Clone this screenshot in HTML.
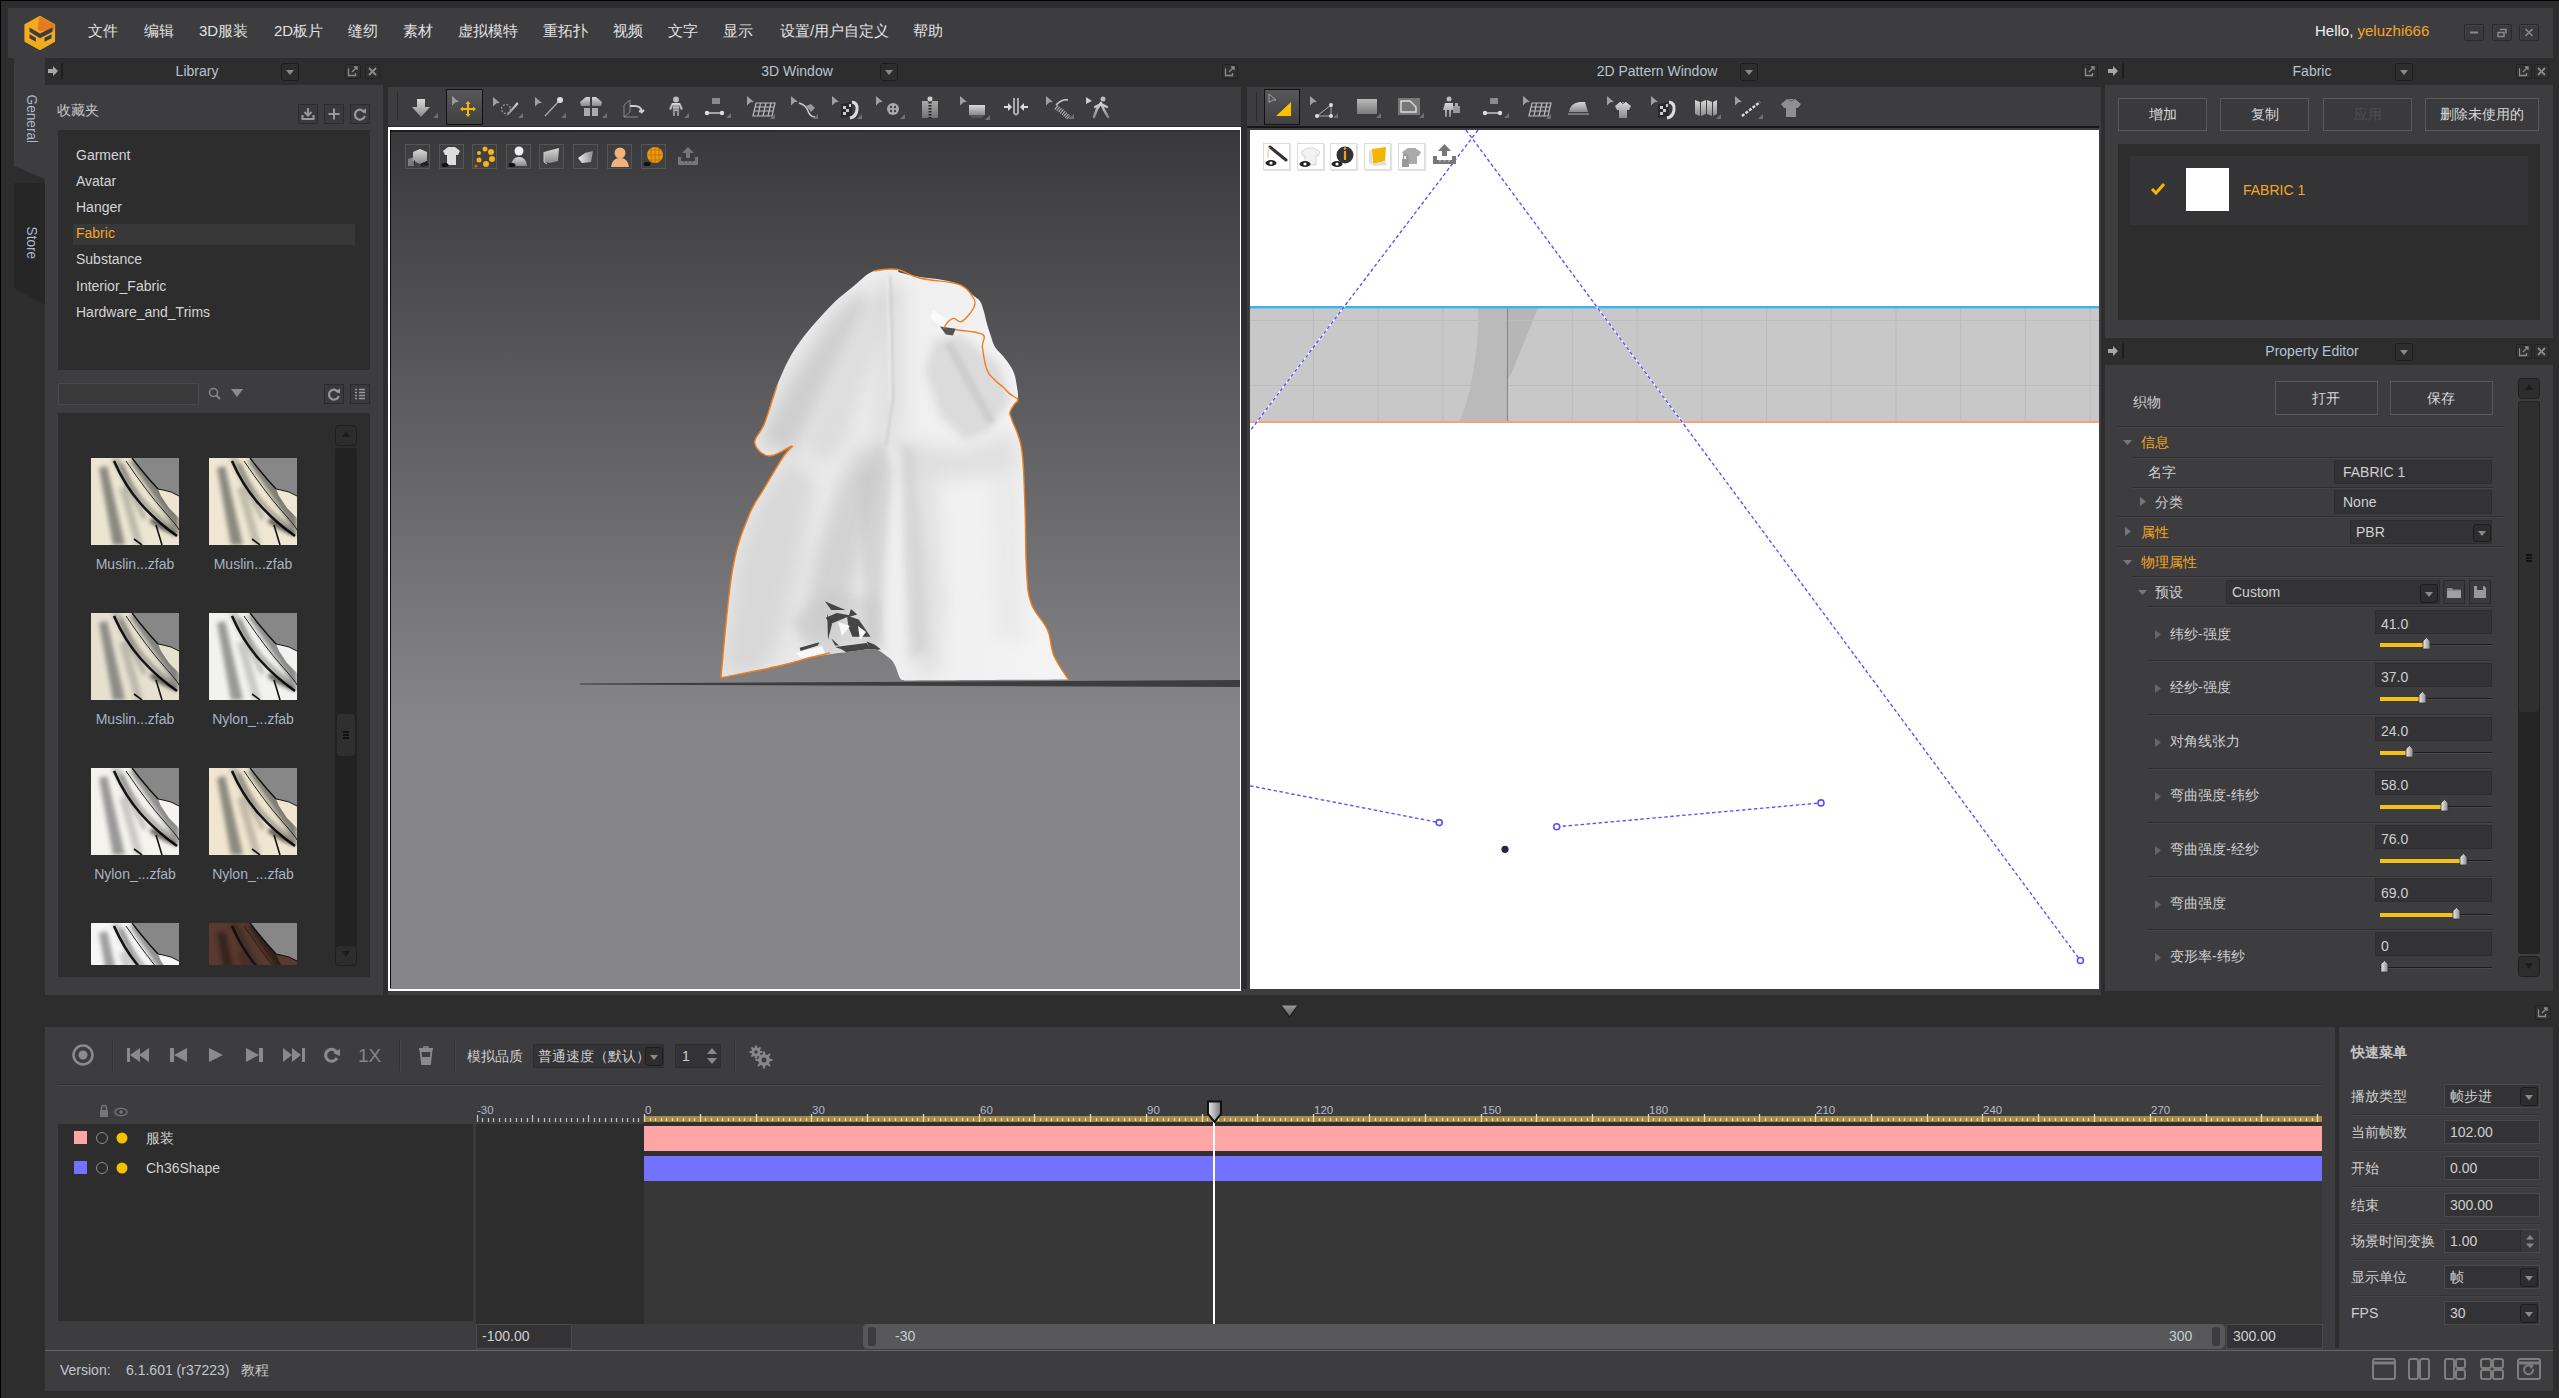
<!DOCTYPE html><html><head><meta charset="utf-8"><style>
*{margin:0;padding:0;box-sizing:border-box}
html,body{width:2559px;height:1398px;overflow:hidden;background:#2d2d2d}
body{position:relative;font-family:"Liberation Sans",sans-serif;font-size:14px;color:#d2d2d2}
div,svg{position:absolute}
.t{white-space:nowrap;line-height:20px;height:20px}

.pn{background:#3d3d3f}
.dk{background:#2d2d2d}
.tt{color:#b9c3d1;font-size:14px}
.mi{color:#e2e2e2;font-size:15px}
.ddb{border:1px solid #1d1d1d;border-radius:3px;background:#2d2d2d}
.tbb{border:1px solid #222;border-radius:2px;background:#2f2f2f}
.li{color:#d4d4d4;font-size:14px}
.or{color:#f5a623}
</style></head><body><div style="left:0px;top:0px;width:2559px;height:1px;background:#000"></div><div style="left:0px;top:0px;width:1px;height:1398px;background:#000"></div><div class="pn" style="left:8px;top:8px;width:2545px;height:50px;"></div><svg style="left:0px;top:0px" width="70" height="60"><path d="M40 17L54 25V41L40 49L25.5 41V25Z" fill="#f2aa1e" stroke="#f2aa1e" stroke-width="2.2" stroke-linejoin="round"/><path d="M40 17L54 25V30L40 30.5L38 29Z" fill="#e47a24" stroke="#e47a24" stroke-width="1" stroke-linejoin="round"/><path d="M29.5 27.5L40 33.5L52.5 27.5V31.8L40 38.3L29.5 31.8Z" fill="#3d3d3f"/><path d="M29.5 34.3L35.8 37.8V41.8L29.5 38.3Z" fill="#3d3d3f"/><path d="M44.5 37.8L51.5 34.3V38.3L44.5 41.8Z" fill="#3d3d3f"/></svg><div class="t mi" style="left:88px;top:21px;">文件</div><div class="t mi" style="left:144px;top:21px;">编辑</div><div class="t mi" style="left:199px;top:21px;">3D服装</div><div class="t mi" style="left:274px;top:21px;">2D板片</div><div class="t mi" style="left:348px;top:21px;">缝纫</div><div class="t mi" style="left:403px;top:21px;">素材</div><div class="t mi" style="left:458px;top:21px;">虚拟模特</div><div class="t mi" style="left:543px;top:21px;">重拓扑</div><div class="t mi" style="left:613px;top:21px;">视频</div><div class="t mi" style="left:668px;top:21px;">文字</div><div class="t mi" style="left:723px;top:21px;">显示</div><div class="t mi" style="left:780px;top:21px;">设置/用户自定义</div><div class="t mi" style="left:913px;top:21px;">帮助</div><div class="t mi" style="left:2315px;top:21px;color:#f0f0f0">Hello, <span class="or">yeluzhi666</span></div><div style="left:2464px;top:24px;width:20px;height:17px;border:1px solid #2a2a2a;border-radius:2px;background:#3a3a3c;box-shadow:inset 1px 1px 0 #444"></div><div style="left:2492px;top:24px;width:20px;height:17px;border:1px solid #2a2a2a;border-radius:2px;background:#3a3a3c;box-shadow:inset 1px 1px 0 #444"></div><div style="left:2519px;top:24px;width:20px;height:17px;border:1px solid #2a2a2a;border-radius:2px;background:#3a3a3c;box-shadow:inset 1px 1px 0 #444"></div><svg style="left:2464px;top:24px" width="20" height="17"><path d="M6 8.5H14" stroke="#8a8a8a" stroke-width="2"/></svg><svg style="left:2492px;top:24px" width="20" height="17"><path d="M8 5.5H14V9.5M6 8.5H12V12.5H6Z" stroke="#8a8a8a" stroke-width="1.5" fill="none"/></svg><svg style="left:2519px;top:24px" width="20" height="17"><path d="M6.5 5L13.5 12M13.5 5L6.5 12" stroke="#8a8a8a" stroke-width="1.6"/></svg><svg style="left:14px;top:58px" width="31" height="250"><path d="M0 0H31V121L0 108Z" fill="#3d3d3f"/><path d="M0 125H31V247L0 230Z" fill="#262626"/></svg><div class="t" style="left:21.5px;top:94px;transform:rotate(90deg) scaleX(0.94);transform-origin:10px 10px;color:#a9b8cc;font-size:14.5px">General</div><div class="t" style="left:21.5px;top:226px;transform:rotate(90deg) scaleX(0.94);transform-origin:10px 10px;color:#a9b8cc;font-size:14.5px">Store</div><div class="pn" style="left:45px;top:85px;width:338px;height:910px;"></div><svg style="left:48px;top:66px" width="10" height="10"><path d="M0 3H5V0L10 5L5 10V7H0Z" fill="#a8a8a8"/></svg><div style="left:61px;top:63px;width:2px;height:16px;background:#1e1e1e"></div><div class="t tt" style="left:47px;width:300px;text-align:center;top:61px;">Library</div><div class="ddb" style="left:281px;top:63px;width:18px;height:18px"></div><svg style="left:286.0px;top:70.0px" width="8" height="5"><path d="M0 0H8L4.0 5Z" fill="#8a8a8a"/></svg><div class="tbb" style="left:345px;top:64px;width:16px;height:15px"></div><svg style="left:345px;top:64px" width="16" height="15"><path d="M4 5H3.5V11.5H10.5V9" stroke="#8c8c8c" stroke-width="1.3" fill="none"/><path d="M7 8L12 3M9 3H12V6" stroke="#8c8c8c" stroke-width="1.3" fill="none"/></svg><div class="tbb" style="left:365px;top:64px;width:15px;height:15px"></div><svg style="left:365px;top:64px" width="15" height="15"><path d="M4 4L11 11M11 4L4 11" stroke="#8c8c8c" stroke-width="1.8"/></svg><div class="t" style="left:57px;top:100px;color:#c8c8c8;font-size:14px">收藏夹</div><div style="left:298px;top:104px;width:20px;height:20px;border:1px solid #2c2c2c;background:#3a3a3c"></div><div style="left:324px;top:104px;width:20px;height:20px;border:1px solid #2c2c2c;background:#3a3a3c"></div><div style="left:350px;top:104px;width:20px;height:20px;border:1px solid #2c2c2c;background:#3a3a3c"></div><svg style="left:298px;top:104px" width="20" height="20"><path d="M10 4V11M6.5 8L10 11.5L13.5 8" stroke="#999" stroke-width="2" fill="none"/><path d="M4.5 11V15H15.5V11" stroke="#999" stroke-width="2" fill="none"/></svg><svg style="left:324px;top:104px" width="20" height="20"><path d="M10 4.5V15.5M4.5 10H15.5" stroke="#999" stroke-width="2"/></svg><svg style="left:350px;top:104px" width="20" height="20"><path d="M14.5 8.5A5 5 0 1 0 14.8 12" stroke="#999" stroke-width="2.2" fill="none"/><path d="M11 7.5L16 4.5V9.5Z" fill="#999"/></svg><div class="dk" style="left:58px;top:130px;width:312px;height:240px;"></div><div style="left:73px;top:224px;width:282px;height:21px;background:#383838"></div><div class="t li" style="left:76px;top:145.0px;">Garment</div><div class="t li" style="left:76px;top:171.1px;">Avatar</div><div class="t li" style="left:76px;top:197.2px;">Hanger</div><div class="t li or" style="left:76px;top:223.3px;">Fabric</div><div class="t li" style="left:76px;top:249.39999999999998px;">Substance</div><div class="t li" style="left:76px;top:275.5px;">Interior_Fabric</div><div class="t li" style="left:76px;top:301.6px;">Hardware_and_Trims</div><div style="left:58px;top:383px;width:141px;height:22px;background:#393939;border:1px solid #4a4a4a"></div><svg style="left:207px;top:386px" width="16" height="16"><circle cx="6.5" cy="6.5" r="4" stroke="#888" stroke-width="1.5" fill="none"/><path d="M9.5 9.5L13 13" stroke="#888" stroke-width="2"/></svg><svg style="left:231px;top:389px" width="12" height="8"><path d="M0 0H12L6.0 8Z" fill="#8c8c8c"/></svg><div style="left:324px;top:384px;width:20px;height:20px;background:#3a3a3c;border:1px solid #2a2a2a"></div><svg style="left:324px;top:384px" width="20" height="20"><path d="M14.5 8.5A5 5 0 1 0 14.8 12" stroke="#999" stroke-width="2.2" fill="none"/><path d="M11 7.5L16 4.5V9.5Z" fill="#999"/></svg><div style="left:350px;top:384px;width:20px;height:20px;background:#3a3a3c;border:1px solid #2a2a2a"></div><svg style="left:350px;top:384px" width="20" height="20"><path d="M5 5.5H7M5 8.5H7M5 11.5H7M5 14.5H7M9 5.5H15M9 8.5H15M9 11.5H15M9 14.5H15" stroke="#999" stroke-width="1.6"/></svg><div class="dk" style="left:58px;top:413px;width:312px;height:564px;"></div><svg style="left:91px;top:458px" width="88" height="87" viewBox="0 0 88 87"><rect width="88" height="87" fill="#ece5d2"/><path d="M8 10L16 8L34 87H22Z" fill="#6a6a64" opacity="0.75" filter="url(#bl2)"/><path d="M28 30L36 28L52 87H44Z" fill="#6a6a64" opacity="0.35" filter="url(#bl2)"/><path d="M38 2L46 2L88 50V76Z" fill="#6a6a64" opacity="0.85" filter="url(#bl2)"/><path d="M20 0L28 0L56 60L52 62Z" fill="#6a6a64" opacity="0.45" filter="url(#bl2)"/><path d="M41 0H88V38L80 34L72 32L67 31L58 21L48 9Z" fill="#878787"/><path d="M67 31L72 32L80 34L88 38V60L78 50L70 38Z" fill="#ece5d2"/><path d="M41 0L48 9L58 21L67 31" stroke="#111" stroke-width="1.4" fill="none"/><path d="M67 31L72 32L80 34L88 38" stroke="#111" stroke-width="1" fill="none"/><path d="M23 3Q34 28 50 46T86 78" stroke="#111" stroke-width="2.6" fill="none"/><path d="M30 6Q40 30 54 46T84 70" stroke="#333" stroke-width="3" fill="none" opacity="0.6" filter="url(#bl2)"/><path d="M35 3Q56 34 72 52T88 72" stroke="#222" stroke-width="1" fill="none"/><path d="M60 62Q72 70 86 76" stroke="#000" stroke-width="4" fill="none" filter="url(#bl2)" opacity="0.8"/><path d="M65 67L71 87" stroke="#111" stroke-width="1.6" fill="none"/><path d="M43 81L51 87" stroke="#111" stroke-width="1.6" fill="none"/></svg><div class="t" style="left:-15px;width:300px;text-align:center;top:554px;font-size:14px;color:#aab3c2">Muslin...zfab</div><svg style="left:209px;top:458px" width="88" height="87" viewBox="0 0 88 87"><rect width="88" height="87" fill="#efe7d3"/><path d="M8 10L16 8L34 87H22Z" fill="#6a6a64" opacity="0.75" filter="url(#bl2)"/><path d="M28 30L36 28L52 87H44Z" fill="#6a6a64" opacity="0.35" filter="url(#bl2)"/><path d="M38 2L46 2L88 50V76Z" fill="#6a6a64" opacity="0.85" filter="url(#bl2)"/><path d="M20 0L28 0L56 60L52 62Z" fill="#6a6a64" opacity="0.45" filter="url(#bl2)"/><path d="M41 0H88V38L80 34L72 32L67 31L58 21L48 9Z" fill="#878787"/><path d="M67 31L72 32L80 34L88 38V60L78 50L70 38Z" fill="#efe7d3"/><path d="M41 0L48 9L58 21L67 31" stroke="#111" stroke-width="1.4" fill="none"/><path d="M67 31L72 32L80 34L88 38" stroke="#111" stroke-width="1" fill="none"/><path d="M23 3Q34 28 50 46T86 78" stroke="#111" stroke-width="2.6" fill="none"/><path d="M30 6Q40 30 54 46T84 70" stroke="#333" stroke-width="3" fill="none" opacity="0.6" filter="url(#bl2)"/><path d="M35 3Q56 34 72 52T88 72" stroke="#222" stroke-width="1" fill="none"/><path d="M60 62Q72 70 86 76" stroke="#000" stroke-width="4" fill="none" filter="url(#bl2)" opacity="0.8"/><path d="M65 67L71 87" stroke="#111" stroke-width="1.6" fill="none"/><path d="M43 81L51 87" stroke="#111" stroke-width="1.6" fill="none"/></svg><div class="t" style="left:103px;width:300px;text-align:center;top:554px;font-size:14px;color:#aab3c2">Muslin...zfab</div><svg style="left:91px;top:613px" width="88" height="87" viewBox="0 0 88 87"><rect width="88" height="87" fill="#e6e0cf"/><path d="M8 10L16 8L34 87H22Z" fill="#707070" opacity="0.75" filter="url(#bl2)"/><path d="M28 30L36 28L52 87H44Z" fill="#707070" opacity="0.35" filter="url(#bl2)"/><path d="M38 2L46 2L88 50V76Z" fill="#707070" opacity="0.85" filter="url(#bl2)"/><path d="M20 0L28 0L56 60L52 62Z" fill="#707070" opacity="0.45" filter="url(#bl2)"/><path d="M41 0H88V38L80 34L72 32L67 31L58 21L48 9Z" fill="#878787"/><path d="M67 31L72 32L80 34L88 38V60L78 50L70 38Z" fill="#e6e0cf"/><path d="M41 0L48 9L58 21L67 31" stroke="#111" stroke-width="1.4" fill="none"/><path d="M67 31L72 32L80 34L88 38" stroke="#111" stroke-width="1" fill="none"/><path d="M23 3Q34 28 50 46T86 78" stroke="#111" stroke-width="2.6" fill="none"/><path d="M30 6Q40 30 54 46T84 70" stroke="#333" stroke-width="3" fill="none" opacity="0.6" filter="url(#bl2)"/><path d="M35 3Q56 34 72 52T88 72" stroke="#222" stroke-width="1" fill="none"/><path d="M60 62Q72 70 86 76" stroke="#000" stroke-width="4" fill="none" filter="url(#bl2)" opacity="0.8"/><path d="M65 67L71 87" stroke="#111" stroke-width="1.6" fill="none"/><path d="M43 81L51 87" stroke="#111" stroke-width="1.6" fill="none"/></svg><div class="t" style="left:-15px;width:300px;text-align:center;top:709px;font-size:14px;color:#aab3c2">Muslin...zfab</div><svg style="left:209px;top:613px" width="88" height="87" viewBox="0 0 88 87"><rect width="88" height="87" fill="#f2f2f0"/><path d="M8 10L16 8L34 87H22Z" fill="#7a7a7a" opacity="0.75" filter="url(#bl2)"/><path d="M28 30L36 28L52 87H44Z" fill="#7a7a7a" opacity="0.35" filter="url(#bl2)"/><path d="M38 2L46 2L88 50V76Z" fill="#7a7a7a" opacity="0.85" filter="url(#bl2)"/><path d="M20 0L28 0L56 60L52 62Z" fill="#7a7a7a" opacity="0.45" filter="url(#bl2)"/><path d="M41 0H88V38L80 34L72 32L67 31L58 21L48 9Z" fill="#878787"/><path d="M67 31L72 32L80 34L88 38V60L78 50L70 38Z" fill="#f2f2f0"/><path d="M41 0L48 9L58 21L67 31" stroke="#111" stroke-width="1.4" fill="none"/><path d="M67 31L72 32L80 34L88 38" stroke="#111" stroke-width="1" fill="none"/><path d="M23 3Q34 28 50 46T86 78" stroke="#111" stroke-width="2.6" fill="none"/><path d="M30 6Q40 30 54 46T84 70" stroke="#333" stroke-width="3" fill="none" opacity="0.6" filter="url(#bl2)"/><path d="M35 3Q56 34 72 52T88 72" stroke="#222" stroke-width="1" fill="none"/><path d="M60 62Q72 70 86 76" stroke="#000" stroke-width="4" fill="none" filter="url(#bl2)" opacity="0.8"/><path d="M65 67L71 87" stroke="#111" stroke-width="1.6" fill="none"/><path d="M43 81L51 87" stroke="#111" stroke-width="1.6" fill="none"/></svg><div class="t" style="left:103px;width:300px;text-align:center;top:709px;font-size:14px;color:#aab3c2">Nylon_...zfab</div><svg style="left:91px;top:768px" width="88" height="87" viewBox="0 0 88 87"><rect width="88" height="87" fill="#f4f3ee"/><path d="M8 10L16 8L34 87H22Z" fill="#7a7a7a" opacity="0.75" filter="url(#bl2)"/><path d="M28 30L36 28L52 87H44Z" fill="#7a7a7a" opacity="0.35" filter="url(#bl2)"/><path d="M38 2L46 2L88 50V76Z" fill="#7a7a7a" opacity="0.85" filter="url(#bl2)"/><path d="M20 0L28 0L56 60L52 62Z" fill="#7a7a7a" opacity="0.45" filter="url(#bl2)"/><path d="M41 0H88V38L80 34L72 32L67 31L58 21L48 9Z" fill="#878787"/><path d="M67 31L72 32L80 34L88 38V60L78 50L70 38Z" fill="#f4f3ee"/><path d="M41 0L48 9L58 21L67 31" stroke="#111" stroke-width="1.4" fill="none"/><path d="M67 31L72 32L80 34L88 38" stroke="#111" stroke-width="1" fill="none"/><path d="M23 3Q34 28 50 46T86 78" stroke="#111" stroke-width="2.6" fill="none"/><path d="M30 6Q40 30 54 46T84 70" stroke="#333" stroke-width="3" fill="none" opacity="0.6" filter="url(#bl2)"/><path d="M35 3Q56 34 72 52T88 72" stroke="#222" stroke-width="1" fill="none"/><path d="M60 62Q72 70 86 76" stroke="#000" stroke-width="4" fill="none" filter="url(#bl2)" opacity="0.8"/><path d="M65 67L71 87" stroke="#111" stroke-width="1.6" fill="none"/><path d="M43 81L51 87" stroke="#111" stroke-width="1.6" fill="none"/></svg><div class="t" style="left:-15px;width:300px;text-align:center;top:864px;font-size:14px;color:#aab3c2">Nylon_...zfab</div><svg style="left:209px;top:768px" width="88" height="87" viewBox="0 0 88 87"><rect width="88" height="87" fill="#f0e6d0"/><path d="M8 10L16 8L34 87H22Z" fill="#6c6a64" opacity="0.75" filter="url(#bl2)"/><path d="M28 30L36 28L52 87H44Z" fill="#6c6a64" opacity="0.35" filter="url(#bl2)"/><path d="M38 2L46 2L88 50V76Z" fill="#6c6a64" opacity="0.85" filter="url(#bl2)"/><path d="M20 0L28 0L56 60L52 62Z" fill="#6c6a64" opacity="0.45" filter="url(#bl2)"/><path d="M41 0H88V38L80 34L72 32L67 31L58 21L48 9Z" fill="#878787"/><path d="M67 31L72 32L80 34L88 38V60L78 50L70 38Z" fill="#f0e6d0"/><path d="M41 0L48 9L58 21L67 31" stroke="#111" stroke-width="1.4" fill="none"/><path d="M67 31L72 32L80 34L88 38" stroke="#111" stroke-width="1" fill="none"/><path d="M23 3Q34 28 50 46T86 78" stroke="#111" stroke-width="2.6" fill="none"/><path d="M30 6Q40 30 54 46T84 70" stroke="#333" stroke-width="3" fill="none" opacity="0.6" filter="url(#bl2)"/><path d="M35 3Q56 34 72 52T88 72" stroke="#222" stroke-width="1" fill="none"/><path d="M60 62Q72 70 86 76" stroke="#000" stroke-width="4" fill="none" filter="url(#bl2)" opacity="0.8"/><path d="M65 67L71 87" stroke="#111" stroke-width="1.6" fill="none"/><path d="M43 81L51 87" stroke="#111" stroke-width="1.6" fill="none"/></svg><div class="t" style="left:103px;width:300px;text-align:center;top:864px;font-size:14px;color:#aab3c2">Nylon_...zfab</div><svg style="left:91px;top:923px" width="88" height="42" viewBox="0 0 88 42"><rect width="88" height="87" fill="#f6f6f6"/><path d="M8 10L16 8L34 87H22Z" fill="#808080" opacity="0.75" filter="url(#bl2)"/><path d="M28 30L36 28L52 87H44Z" fill="#808080" opacity="0.35" filter="url(#bl2)"/><path d="M38 2L46 2L88 50V76Z" fill="#808080" opacity="0.85" filter="url(#bl2)"/><path d="M20 0L28 0L56 60L52 62Z" fill="#808080" opacity="0.45" filter="url(#bl2)"/><path d="M41 0H88V38L80 34L72 32L67 31L58 21L48 9Z" fill="#878787"/><path d="M67 31L72 32L80 34L88 38V60L78 50L70 38Z" fill="#f6f6f6"/><path d="M41 0L48 9L58 21L67 31" stroke="#111" stroke-width="1.4" fill="none"/><path d="M67 31L72 32L80 34L88 38" stroke="#111" stroke-width="1" fill="none"/><path d="M23 3Q34 28 50 46T86 78" stroke="#111" stroke-width="2.6" fill="none"/><path d="M30 6Q40 30 54 46T84 70" stroke="#333" stroke-width="3" fill="none" opacity="0.6" filter="url(#bl2)"/><path d="M35 3Q56 34 72 52T88 72" stroke="#222" stroke-width="1" fill="none"/><path d="M60 62Q72 70 86 76" stroke="#000" stroke-width="4" fill="none" filter="url(#bl2)" opacity="0.8"/><path d="M65 67L71 87" stroke="#111" stroke-width="1.6" fill="none"/><path d="M43 81L51 87" stroke="#111" stroke-width="1.6" fill="none"/></svg><svg style="left:209px;top:923px" width="88" height="42" viewBox="0 0 88 42"><rect width="88" height="87" fill="#5a3a30"/><path d="M8 10L16 8L34 87H22Z" fill="#2a1a16" opacity="0.75" filter="url(#bl2)"/><path d="M28 30L36 28L52 87H44Z" fill="#2a1a16" opacity="0.35" filter="url(#bl2)"/><path d="M38 2L46 2L88 50V76Z" fill="#2a1a16" opacity="0.85" filter="url(#bl2)"/><path d="M20 0L28 0L56 60L52 62Z" fill="#2a1a16" opacity="0.45" filter="url(#bl2)"/><path d="M41 0H88V38L80 34L72 32L67 31L58 21L48 9Z" fill="#878787"/><path d="M67 31L72 32L80 34L88 38V60L78 50L70 38Z" fill="#5a3a30"/><path d="M41 0L48 9L58 21L67 31" stroke="#111" stroke-width="1.4" fill="none"/><path d="M67 31L72 32L80 34L88 38" stroke="#111" stroke-width="1" fill="none"/><path d="M23 3Q34 28 50 46T86 78" stroke="#111" stroke-width="2.6" fill="none"/><path d="M30 6Q40 30 54 46T84 70" stroke="#333" stroke-width="3" fill="none" opacity="0.6" filter="url(#bl2)"/><path d="M35 3Q56 34 72 52T88 72" stroke="#222" stroke-width="1" fill="none"/><path d="M60 62Q72 70 86 76" stroke="#000" stroke-width="4" fill="none" filter="url(#bl2)" opacity="0.8"/><path d="M65 67L71 87" stroke="#111" stroke-width="1.6" fill="none"/><path d="M43 81L51 87" stroke="#111" stroke-width="1.6" fill="none"/></svg><div style="left:335px;top:425px;width:22px;height:21px;background:#2d2d2d;border:1px solid #1f1f1f;border-radius:4px"></div><svg style="left:342px;top:431px" width="8" height="6"><path d="M0 6H8L4 0Z" fill="#1c1c1c"/></svg><div style="left:335px;top:448px;width:22px;height:500px;background:#222;border-radius:3px"></div><div style="left:337px;top:714px;width:18px;height:42px;background:#2f2f2f;border-radius:3px"></div><div style="left:343px;top:731px;width:6px;height:1.5px;background:#111"></div><div style="left:343px;top:734px;width:6px;height:1.5px;background:#111"></div><div style="left:343px;top:737px;width:6px;height:1.5px;background:#111"></div><div style="left:335px;top:945px;width:22px;height:21px;background:#2d2d2d;border:1px solid #1f1f1f;border-radius:4px"></div><svg style="left:342px;top:951px" width="8" height="6"><path d="M0 0H8L4 6Z" fill="#1c1c1c"/></svg><div class="pn" style="left:388px;top:87px;width:853px;height:39px;"></div><div class="t tt" style="left:647px;width:300px;text-align:center;top:61px;">3D Window</div><div class="ddb" style="left:880px;top:63px;width:18px;height:18px"></div><svg style="left:885.0px;top:70.0px" width="8" height="5"><path d="M0 0H8L4.0 5Z" fill="#8a8a8a"/></svg><div class="tbb" style="left:1222px;top:64px;width:16px;height:15px"></div><svg style="left:1222px;top:64px" width="16" height="15"><path d="M4 5H3.5V11.5H10.5V9" stroke="#8c8c8c" stroke-width="1.3" fill="none"/><path d="M7 8L12 3M9 3H12V6" stroke="#8c8c8c" stroke-width="1.3" fill="none"/></svg><div style="left:388px;top:127px;width:853px;height:864px;background:#fff"></div><div style="left:390px;top:130px;width:850px;height:859px;background:linear-gradient(#39393b 0px,#868688 590px,#868688 859px)"></div><svg style="left:0;top:0" width="0" height="0"><defs><linearGradient id="gI" x1="0" y1="0" x2="0" y2="1"><stop offset="0" stop-color="#d8d8d8"/><stop offset="1" stop-color="#8a8a8a"/></linearGradient><linearGradient id="gB" x1="0" y1="0" x2="0" y2="1"><stop offset="0" stop-color="#58585a"/><stop offset="1" stop-color="#3e3e40"/></linearGradient><linearGradient id="gH" x1="0" y1="0" x2="1" y2="0"><stop offset="0" stop-color="#f0f0f0"/><stop offset="1" stop-color="#8c8c8c"/></linearGradient><filter id="bl1" x="-50%" y="-50%" width="200%" height="200%"><feGaussianBlur stdDeviation="0.8"/></filter><filter id="bl2" x="-50%" y="-50%" width="200%" height="200%"><feGaussianBlur stdDeviation="2"/></filter><filter id="bl4" x="-50%" y="-50%" width="200%" height="200%"><feGaussianBlur stdDeviation="4"/></filter><filter id="bl8" x="-50%" y="-50%" width="200%" height="200%"><feGaussianBlur stdDeviation="8"/></filter></defs></svg><div style="left:397px;top:92px;width:1.2px;height:29px;background:#2a2a2a"></div><svg style="left:410px;top:97px" width="22" height="22" viewBox="0 0 22 22"><path d="M7 2H15V10H20L11 20L2 10H7Z" fill="url(#gI)"/></svg><svg style="left:433px;top:113px" width="5" height="5"><path d="M5 0V5H0Z" fill="#707070"/></svg><div style="left:446px;top:89px;width:37px;height:36px;background:linear-gradient(#58585a,#404042);border:1px solid #111;border-radius:1px"></div><svg style="left:452px;top:96px" width="8" height="10"><path d="M0 0L7 6L3.5 6.2L0 9.5Z" fill="#9a9a9a"/></svg><svg style="left:460px;top:101px" width="16" height="16" viewBox="0 0 16 16"><path d="M8 1V15M1 8H15" stroke="#f5b800" stroke-width="2"/><path d="M8 0L10.5 3H5.5ZM8 16L10.5 13H5.5ZM0 8L3 5.5V10.5ZM16 8L13 5.5V10.5Z" fill="#f5b800"/></svg><svg style="left:493px;top:97px" width="8" height="10"><path d="M0 0L7 6L3.5 6.2L0 9.5Z" fill="#a0a0a0"/></svg><svg style="left:500px;top:99px" width="20" height="20" viewBox="0 0 20 20"><circle cx="6" cy="10" r="4.5" stroke="#999" stroke-width="1.2" stroke-dasharray="2 1.5" fill="none"/><path d="M17 3L8 14L6 17L9 15.5L18.5 5Z" fill="url(#gI)"/></svg><svg style="left:518px;top:113px" width="5" height="5"><path d="M5 0V5H0Z" fill="#707070"/></svg><svg style="left:535px;top:97px" width="8" height="10"><path d="M0 0L7 6L3.5 6.2L0 9.5Z" fill="#a0a0a0"/></svg><svg style="left:542px;top:96px" width="22" height="22" viewBox="0 0 22 22"><path d="M3 20L17 5" stroke="#aaa" stroke-width="1.3"/><circle cx="18" cy="4" r="3" fill="#ddd"/></svg><svg style="left:561px;top:113px" width="5" height="5"><path d="M5 0V5H0Z" fill="#707070"/></svg><svg style="left:578px;top:96px" width="26" height="22" viewBox="0 0 26 22"><path d="M2 6L8 1H12V10H3Z M24 6L18 1H14V10H23Z" fill="url(#gI)"/><rect x="6" y="12" width="6" height="8" fill="#aaa"/><rect x="14" y="12" width="6" height="8" fill="#aaa"/></svg><svg style="left:602px;top:113px" width="5" height="5"><path d="M5 0V5H0Z" fill="#707070"/></svg><svg style="left:621px;top:97px" width="26" height="22" viewBox="0 0 26 22"><path d="M3 8L9 3V15L3 20Z M3 20H17" stroke="#888" stroke-width="1" fill="none"/><path d="M9 9H14Q20 9 21 15L23 13M21 15L18 14" stroke="#cfcfcf" stroke-width="2" fill="none"/></svg><svg style="left:666px;top:96px" width="20" height="22" viewBox="0 0 20 22"><circle cx="10" cy="3.5" r="3" fill="#bbb"/><path d="M6 7H14L17 13L15 14L13 10V20H11V15H9V20H7V10L5 14L3 13Z" fill="url(#gI)"/><path d="M6 10H14M6 13H14M6 16H14" stroke="#666" stroke-width="0.8"/></svg><svg style="left:684px;top:113px" width="5" height="5"><path d="M5 0V5H0Z" fill="#707070"/></svg><svg style="left:703px;top:96px" width="26" height="22" viewBox="0 0 26 22"><path d="M9 2H17V8H9Z" fill="#8a8a8a"/><circle cx="4" cy="17" r="2.2" fill="#ddd"/><circle cx="19" cy="17" r="2.2" fill="#ddd"/><path d="M4 17H19" stroke="#ddd" stroke-width="1.3"/></svg><svg style="left:726px;top:113px" width="5" height="5"><path d="M5 0V5H0Z" fill="#707070"/></svg><svg style="left:747px;top:96px" width="8" height="10"><path d="M0 0L7 6L3.5 6.2L0 9.5Z" fill="#a0a0a0"/></svg><svg style="left:752px;top:101px" width="24" height="17" viewBox="0 0 24 17"><path d="M4 2H23L20 15H1Z M8.5 2L6 15M14 2L11 15M19 2L16 15M3 6H22M2 10H21" stroke="#bbb" stroke-width="1.2" fill="none"/></svg><svg style="left:770px;top:114px" width="5" height="5"><path d="M5 0V5H0Z" fill="#707070"/></svg><svg style="left:791px;top:96px" width="8" height="10"><path d="M0 0L7 6L3.5 6.2L0 9.5Z" fill="#a0a0a0"/></svg><svg style="left:796px;top:99px" width="22" height="20" viewBox="0 0 22 20"><path d="M3 4Q10 6 12 12T19 18" stroke="#ccc" stroke-width="1.5" fill="none"/><path d="M10 7L15 5L19 9L15 13Z" fill="#999"/></svg><svg style="left:813px;top:114px" width="5" height="5"><path d="M5 0V5H0Z" fill="#707070"/></svg><svg style="left:832px;top:96px" width="8" height="10"><path d="M0 0L7 6L3.5 6.2L0 9.5Z" fill="#a0a0a0"/></svg><svg style="left:838px;top:98px" width="22" height="22" viewBox="0 0 22 22"><path d="M3 6L14 4V18L3 20Z" fill="#2a2a2a"/><path d="M5 8H8V11H5ZM8 11H11V14H8ZM5 14H8V17H5ZM11 6H13V9H11Z" fill="#ccc"/><path d="M14 4Q20 5 19 12Q18 19 12 20" stroke="#ddd" stroke-width="3" fill="none"/></svg><svg style="left:857px;top:114px" width="5" height="5"><path d="M5 0V5H0Z" fill="#707070"/></svg><svg style="left:876px;top:96px" width="8" height="10"><path d="M0 0L7 6L3.5 6.2L0 9.5Z" fill="#a0a0a0"/></svg><svg style="left:882px;top:99px" width="22" height="20" viewBox="0 0 22 20"><circle cx="11" cy="10" r="6" fill="#aaa"/><circle cx="9" cy="8" r="1.2" fill="#444"/><circle cx="13" cy="8" r="1.2" fill="#444"/><circle cx="9" cy="12" r="1.2" fill="#444"/><circle cx="13" cy="12" r="1.2" fill="#444"/></svg><svg style="left:900px;top:114px" width="5" height="5"><path d="M5 0V5H0Z" fill="#707070"/></svg><svg style="left:919px;top:95px" width="22" height="24" viewBox="0 0 22 24"><rect x="3" y="6" width="16" height="17" fill="url(#gI)" opacity="0.7"/><path d="M11 4V23" stroke="#222" stroke-width="3" stroke-dasharray="1.5 1.5"/><circle cx="11" cy="4" r="3" fill="#ccc" stroke="#555"/></svg><svg style="left:960px;top:96px" width="8" height="10"><path d="M0 0L7 6L3.5 6.2L0 9.5Z" fill="#a0a0a0"/></svg><svg style="left:966px;top:99px" width="22" height="20" viewBox="0 0 22 20"><path d="M3 6H19V16H3Z" fill="url(#gI)"/><path d="M3 16L19 16L16 19H6Z" fill="#555"/></svg><svg style="left:985px;top:115px" width="5" height="5"><path d="M5 0V5H0Z" fill="#707070"/></svg><svg style="left:1003px;top:96px" width="26" height="22" viewBox="0 0 26 22"><path d="M11 2V17Q13 20 15 17V2" stroke="#aaa" stroke-width="2" fill="none"/><path d="M1 11H7M25 11H19" stroke="#ddd" stroke-width="2"/><path d="M9 11L5 7V15ZM17 11L21 7V15Z" fill="#ddd"/></svg><svg style="left:1046px;top:96px" width="8" height="10"><path d="M0 0L7 6L3.5 6.2L0 9.5Z" fill="#a0a0a0"/></svg><svg style="left:1052px;top:97px" width="22" height="22" viewBox="0 0 22 22"><path d="M4 10Q12 16 18 22" stroke="#bbb" stroke-width="5" stroke-dasharray="1 1.2" fill="none"/><path d="M4 8Q10 2 16 3" stroke="#ccc" stroke-width="1.5" fill="none"/></svg><svg style="left:1069px;top:114px" width="5" height="5"><path d="M5 0V5H0Z" fill="#707070"/></svg><svg style="left:1086px;top:95px" width="28" height="24" viewBox="0 0 28 24"><path d="M0 2L6 6L0 9Z" fill="#ccc"/><circle cx="17" cy="4" r="2.5" fill="#bbb"/><path d="M15 8L11 14L8 22M15 8L18 15L22 22M13 10L9 12M15 9L21 12" stroke="url(#gI)" stroke-width="2.5" fill="none" stroke-linecap="round"/></svg><svg style="left:390px;top:130px" width="850" height="858" viewBox="0 0 850 858"><defs><clipPath id="clc"><path d="M678.4 549.5 C649.0 549.7 544.4 550.3 515.0 550.5 L515.0 550.5 C514.1 550.0 512.0 551.1 510.0 548.0 C508.0 544.9 506.5 537.5 504.0 533.5 C501.5 529.5 499.5 528.2 496.0 525.6 C492.5 523.0 490.1 520.1 484.5 519.3 C478.9 518.5 476.3 519.6 465.0 521.0 C453.7 522.4 435.0 524.5 421.5 527.2 C408.0 529.9 406.3 532.1 390.0 535.8 C373.7 539.5 341.5 545.7 330.9 547.9 L330.9 547.9 C332.9 528.8 337.3 470.7 342.2 441.7 C347.1 412.7 352.5 402.1 358.3 387.0 C364.1 371.9 368.0 369.0 374.4 358.0 C380.8 347.0 388.8 333.5 393.7 326.0 C398.6 318.5 400.3 318.0 401.7 316.3 L401.7 316.3 C397.7 318.0 385.9 326.6 379.2 326.0 C372.5 325.4 365.6 318.8 364.7 313.0 C363.8 307.2 370.3 304.1 374.4 293.7 C378.4 283.3 381.4 269.0 387.2 255.1 C393.0 241.2 397.2 230.4 406.5 216.5 C415.8 202.6 428.3 188.9 438.7 177.9 C449.1 166.9 456.3 162.1 464.4 155.4 C472.5 148.7 476.2 143.8 483.7 140.9 C491.2 138.0 501.6 139.0 506.3 139.3 C511.0 139.6 505.7 141.2 510.0 142.6 C514.3 144.0 522.8 145.8 530.0 147.0 C537.2 148.2 542.9 148.1 550.0 149.5 C557.1 150.9 563.5 151.7 569.5 154.6 C575.5 157.5 579.6 162.5 583.3 165.5 C587.0 168.5 588.1 168.5 590.0 171.2 C591.9 173.9 592.3 176.3 593.6 180.4 C594.9 184.5 595.8 189.7 597.0 194.0 C598.2 198.3 599.0 200.3 600.4 204.4 C601.8 208.5 602.7 213.1 605.0 217.0 C607.3 220.9 610.3 222.7 613.0 226.0 C615.7 229.3 617.8 232.0 619.9 235.3 C622.0 238.6 623.3 240.8 624.5 244.5 C625.7 248.2 626.2 251.9 626.8 256.0 C627.4 260.1 628.4 264.1 628.0 267.4 C627.6 270.7 625.9 271.5 624.5 274.2 C623.1 276.9 620.5 279.4 620.0 282.2 C619.5 285.0 619.9 283.3 622.0 290.0 C624.1 296.7 629.4 303.8 631.7 319.5 C634.0 335.2 634.1 355.4 635.0 377.4 C635.9 399.4 635.4 424.3 636.6 441.7 C637.8 459.1 637.6 463.5 641.4 473.9 C645.2 484.3 653.5 490.4 657.5 499.7 C661.5 509.0 660.1 516.4 663.9 525.4 C667.7 534.4 675.8 545.2 678.4 549.5Z"/></clipPath><linearGradient id="gcl" x1="0" y1="0" x2="1" y2="0"><stop offset="0" stop-color="#e4e4e4"/><stop offset="0.5" stop-color="#efefef"/><stop offset="1" stop-color="#f4f4f4"/></linearGradient></defs><path d="M190 553.5L850 550V557L190 554.5Z" fill="#3d3d3f"/><path d="M678.4 549.5 C649.0 549.7 544.4 550.3 515.0 550.5 L515.0 550.5 C514.1 550.0 512.0 551.1 510.0 548.0 C508.0 544.9 506.5 537.5 504.0 533.5 C501.5 529.5 499.5 528.2 496.0 525.6 C492.5 523.0 490.1 520.1 484.5 519.3 C478.9 518.5 476.3 519.6 465.0 521.0 C453.7 522.4 435.0 524.5 421.5 527.2 C408.0 529.9 406.3 532.1 390.0 535.8 C373.7 539.5 341.5 545.7 330.9 547.9 L330.9 547.9 C332.9 528.8 337.3 470.7 342.2 441.7 C347.1 412.7 352.5 402.1 358.3 387.0 C364.1 371.9 368.0 369.0 374.4 358.0 C380.8 347.0 388.8 333.5 393.7 326.0 C398.6 318.5 400.3 318.0 401.7 316.3 L401.7 316.3 C397.7 318.0 385.9 326.6 379.2 326.0 C372.5 325.4 365.6 318.8 364.7 313.0 C363.8 307.2 370.3 304.1 374.4 293.7 C378.4 283.3 381.4 269.0 387.2 255.1 C393.0 241.2 397.2 230.4 406.5 216.5 C415.8 202.6 428.3 188.9 438.7 177.9 C449.1 166.9 456.3 162.1 464.4 155.4 C472.5 148.7 476.2 143.8 483.7 140.9 C491.2 138.0 501.6 139.0 506.3 139.3 C511.0 139.6 505.7 141.2 510.0 142.6 C514.3 144.0 522.8 145.8 530.0 147.0 C537.2 148.2 542.9 148.1 550.0 149.5 C557.1 150.9 563.5 151.7 569.5 154.6 C575.5 157.5 579.6 162.5 583.3 165.5 C587.0 168.5 588.1 168.5 590.0 171.2 C591.9 173.9 592.3 176.3 593.6 180.4 C594.9 184.5 595.8 189.7 597.0 194.0 C598.2 198.3 599.0 200.3 600.4 204.4 C601.8 208.5 602.7 213.1 605.0 217.0 C607.3 220.9 610.3 222.7 613.0 226.0 C615.7 229.3 617.8 232.0 619.9 235.3 C622.0 238.6 623.3 240.8 624.5 244.5 C625.7 248.2 626.2 251.9 626.8 256.0 C627.4 260.1 628.4 264.1 628.0 267.4 C627.6 270.7 625.9 271.5 624.5 274.2 C623.1 276.9 620.5 279.4 620.0 282.2 C619.5 285.0 619.9 283.3 622.0 290.0 C624.1 296.7 629.4 303.8 631.7 319.5 C634.0 335.2 634.1 355.4 635.0 377.4 C635.9 399.4 635.4 424.3 636.6 441.7 C637.8 459.1 637.6 463.5 641.4 473.9 C645.2 484.3 653.5 490.4 657.5 499.7 C661.5 509.0 660.1 516.4 663.9 525.4 C667.7 534.4 675.8 545.2 678.4 549.5Z" fill="url(#gcl)"/><g clip-path="url(#clc)"><polygon points="370.0,310.0 400.0,250.0 440.0,190.0 470.0,160.0 480.0,170.0 450.0,230.0 420.0,290.0 400.0,325.0" fill="#bdbdbd" opacity="0.6" filter="url(#bl8)"/><polygon points="490.0,150.0 515.0,155.0 515.0,290.0 500.0,330.0 480.0,330.0 485.0,250.0" fill="#d4d4d4" opacity="0.5" filter="url(#bl8)"/><polygon points="335.0,540.0 350.0,430.0 370.0,370.0 400.0,330.0 425.0,350.0 410.0,430.0 390.0,510.0 370.0,542.0" fill="#cacaca" opacity="0.5" filter="url(#bl8)"/><polygon points="410.0,510.0 425.0,430.0 450.0,350.0 475.0,310.0 490.0,340.0 470.0,430.0 450.0,510.0" fill="#bebebe" opacity="0.55" filter="url(#bl8)"/><polygon points="470.0,350.0 490.0,310.0 503.0,340.0 495.0,430.0 490.0,510.0 476.0,520.0 472.0,430.0" fill="#c2c2c2" opacity="0.55" filter="url(#bl4)"/><polygon points="510.0,310.0 525.0,320.0 535.0,430.0 538.0,520.0 520.0,530.0 515.0,430.0" fill="#bcbcbc" opacity="0.45" filter="url(#bl4)"/><polygon points="545.0,210.0 570.0,205.0 610.0,235.0 620.0,270.0 600.0,300.0 575.0,310.0 550.0,285.0 535.0,240.0" fill="#c0c0c0" opacity="0.45" filter="url(#bl4)"/><polygon points="555.0,215.0 562.0,212.0 605.0,290.0 598.0,295.0" fill="#b8b8b8" opacity="0.4" filter="url(#bl2)"/><polygon points="515.0,310.0 570.0,320.0 625.0,300.0 630.0,340.0 570.0,350.0 520.0,345.0" fill="#cdcdcd" opacity="0.45" filter="url(#bl8)"/><polygon points="525.0,340.0 545.0,340.0 555.0,470.0 550.0,545.0 525.0,545.0 528.0,430.0" fill="#d0d0d0" opacity="0.45" filter="url(#bl8)"/><polygon points="600.0,340.0 632.0,340.0 635.0,510.0 605.0,510.0" fill="#dadada" opacity="0.3" filter="url(#bl8)"/><polygon points="400.0,490.0 440.0,460.0 490.0,470.0 495.0,520.0 430.0,530.0" fill="#c8c8c8" opacity="0.5" filter="url(#bl4)"/><polygon points="415.0,315.0 445.0,250.0 480.0,175.0 496.0,152.0 502.0,170.0 475.0,255.0 455.0,315.0 432.0,335.0" fill="#c8c8c8" opacity="0.4" filter="url(#bl8)"/><polyline points="500.0,146.0 502.0,200.0 503.0,270.0 496.0,315.0" fill="none" stroke="#c4c4c4" stroke-width="1.6" opacity="0.8" filter="url(#bl1)"/><polyline points="497.0,148.0 499.0,200.0 500.0,270.0" fill="none" stroke="#fafafa" stroke-width="2" opacity="0.45" filter="url(#bl1)"/><polygon points="543.0,180.0 560.0,192.0 556.0,200.0 540.0,188.0" fill="#fafafa"/><polygon points="550.0,196.4 566.0,198.7 562.7,205.5 555.8,204.4" fill="#545456"/><polygon points="434.9,471.3 455.4,479.9 441.2,479.9" fill="#454545"/><polygon points="460.9,479.1 467.2,484.6 458.5,487.0" fill="#454545"/><polygon points="435.7,487.8 446.7,483.1 460.9,485.4 440.4,494.1" fill="#454545"/><polygon points="456.9,485.4 468.7,489.4 480.6,506.7 462.4,506.7 458.5,497.2" fill="#454545"/><polygon points="437.2,483.9 442.0,494.1 438.0,509.8" fill="#454545"/><polygon points="409.7,517.7 429.4,512.2 427.8,515.4 410.5,520.9" fill="#454545"/><polygon points="441.2,508.3 449.0,515.4 445.1,515.4" fill="#454545"/><polygon points="445.1,516.9 476.6,513.0 480.6,519.3 464.8,527.2 451.4,519.3" fill="#454545"/><polygon points="476.6,511.4 484.5,514.6 490.8,519.3 480.6,520.9" fill="#454545"/><polygon points="406.0,523.0 432.0,516.0 436.0,525.0 410.0,528.0" fill="#f8f8f8"/><polygon points="448.0,492.0 460.0,496.0 452.0,506.0" fill="#f8f8f8"/><polygon points="468.0,496.0 476.0,502.0 470.0,510.0" fill="#f8f8f8"/></g><path d="M330.9 547.9 C332.9 528.8 337.3 470.7 342.2 441.7 C347.1 412.7 352.5 402.1 358.3 387.0 C364.1 371.9 368.0 369.0 374.4 358.0 C380.8 347.0 388.8 333.5 393.7 326.0 C398.6 318.5 404.3 316.3 401.7 316.3 C399.1 316.3 385.9 326.6 379.2 326.0 C372.5 325.4 365.6 318.8 364.7 313.0 C363.8 307.2 370.3 304.1 374.4 293.7 C378.4 283.3 384.9 262.0 387.2 255.1" fill="none" stroke="#ef7d1c" stroke-width="1.4"/><path d="M483.7 140.9 C487.8 140.6 497.9 138.0 506.3 139.3 C514.7 140.6 519.2 145.5 530.6 148.3 C542.0 151.1 560.0 151.1 569.5 154.6 C579.0 158.1 580.6 164.0 583.3 167.8 C586.0 171.6 585.2 172.7 584.4 175.8 C583.6 178.9 581.2 182.1 578.7 185.0 C576.2 187.9 573.4 191.2 570.7 191.8 C568.0 192.4 566.1 188.4 563.8 188.4 C561.5 188.4 559.9 189.9 558.0 191.8 C556.1 193.7 554.3 197.5 553.5 198.7" fill="none" stroke="#ef7d1c" stroke-width="1.4"/><path d="M566.0 199.8 C570.8 200.6 587.6 201.3 592.4 204.4 C597.2 207.5 591.6 210.6 592.4 217.0 C593.2 223.4 594.7 233.9 597.0 239.9 C599.3 245.9 602.1 247.1 605.0 250.2 C607.9 253.3 610.3 254.5 613.0 257.0 C615.7 259.5 617.2 261.6 619.9 263.9 C622.6 266.2 627.2 267.8 628.0 269.7 C628.8 271.6 625.9 271.9 624.5 274.2 C623.1 276.4 620.5 279.4 620.0 282.2 C619.5 285.0 619.9 283.3 622.0 290.0 C624.1 296.7 629.4 303.8 631.7 319.5 C634.0 335.2 634.1 355.4 635.0 377.4 C635.9 399.4 635.4 424.3 636.6 441.7 C637.8 459.1 637.6 463.5 641.4 473.9 C645.2 484.3 653.5 490.4 657.5 499.7 C661.5 509.0 660.1 516.4 663.9 525.4 C667.7 534.4 675.8 545.2 678.4 549.5" fill="none" stroke="#ef7d1c" stroke-width="1.4"/><path d="M330.9 547.9 C341.5 545.7 373.7 539.5 390.0 535.8 C406.3 532.1 412.5 529.5 421.5 527.2 C430.5 524.9 436.7 523.8 440.0 523.0" fill="none" stroke="#ef7d1c" stroke-width="1.4"/></svg><div style="left:390px;top:130px;width:850px;height:1.5px;background:linear-gradient(90deg,#1a1a1a,#2a2a2a 30%,#333 100%)"></div><div style="left:390px;top:130px;width:1.2px;height:858px;background:#0a0a0a"></div><div style="left:405px;top:144px;width:25px;height:25px;border:1px solid #555;background:rgba(255,255,255,0.02)"></div><div style="left:439px;top:144px;width:25px;height:25px;border:1px solid #555;background:rgba(255,255,255,0.02)"></div><div style="left:472px;top:144px;width:25px;height:25px;border:1px solid #555;background:rgba(255,255,255,0.02)"></div><div style="left:506px;top:144px;width:25px;height:25px;border:1px solid #555;background:rgba(255,255,255,0.02)"></div><div style="left:539px;top:144px;width:25px;height:25px;border:1px solid #555;background:rgba(255,255,255,0.02)"></div><div style="left:573px;top:144px;width:25px;height:25px;border:1px solid #555;background:rgba(255,255,255,0.02)"></div><div style="left:607px;top:144px;width:25px;height:25px;border:1px solid #555;background:rgba(255,255,255,0.02)"></div><div style="left:641px;top:144px;width:25px;height:25px;border:1px solid #555;background:rgba(255,255,255,0.02)"></div><svg style="left:405px;top:144px" width="25" height="25" viewBox="0 0 25 25"><path d="M8 8L15 5L22 8V17L15 20L8 17Z" fill="url(#gI)"/><path d="M3 22L10 16V21ZM15 20L22 17L24 21L17 23Z" fill="#222"/><path d="M3 15L9 13V22H3Z" fill="#aaa" opacity="0.6"/></svg><svg style="left:439px;top:144px" width="25" height="25" viewBox="0 0 25 25"><path d="M4 7L9 3H16L21 7L19 11H17V21H8V11H6Z" fill="#ddd"/><ellipse cx="6" cy="21" rx="3.5" ry="2" fill="#111"/></svg><svg style="left:472px;top:144px" width="25" height="25" viewBox="0 0 25 25"><circle cx="13" cy="5" r="2.5" fill="#f5b21a"/><circle cx="19" cy="8" r="3" fill="#f5b21a"/><circle cx="20" cy="15" r="3" fill="#f5b21a"/><circle cx="14" cy="20" r="3" fill="#f5b21a"/><circle cx="7" cy="16" r="2.5" fill="#f5b21a"/><circle cx="7" cy="9" r="2" fill="#f5b21a"/><circle cx="4" cy="22" r="1.5" fill="#d06010"/></svg><svg style="left:506px;top:144px" width="25" height="25" viewBox="0 0 25 25"><circle cx="13" cy="7" r="4.5" fill="#eee"/><path d="M5 22Q6 13 13 13Q20 13 21 22Z" fill="url(#gI)"/><ellipse cx="6" cy="21" rx="3.5" ry="2" fill="#111"/></svg><svg style="left:539px;top:144px" width="25" height="25" viewBox="0 0 25 25"><path d="M5 8L12 6L20 4L19 17L11 19L5 18Z" fill="url(#gI)"/><path d="M5 8V18L8 20" stroke="#ccc" fill="none"/></svg><svg style="left:573px;top:144px" width="25" height="25" viewBox="0 0 25 25"><path d="M5 14L12 9L20 7L18 18L9 19Z" fill="url(#gH)"/></svg><svg style="left:607px;top:144px" width="25" height="25" viewBox="0 0 25 25"><circle cx="13" cy="9" r="5.5" fill="#f3b27a"/><path d="M4 23Q5 14 13 14Q21 14 22 23Z" fill="#f3b27a"/></svg><svg style="left:641px;top:144px" width="25" height="25" viewBox="0 0 25 25"><circle cx="14" cy="11" r="8" fill="#e89a10"/><path d="M6 11H22M14 3V19M8 6H20M8 16H20M10 4V18M18 4V18" stroke="#b05000" stroke-width="0.8" opacity="0.6"/><ellipse cx="6" cy="20" rx="3.5" ry="2" fill="#111"/></svg><svg style="left:675px;top:145px" width="26" height="24" viewBox="0 0 26 24"><path d="M13 2L19 8H15V13H11V8H7Z" fill="#777"/><path d="M3 12V20H23V12H20V16H6V12Z" fill="#777"/><path d="M8 17H10M12 17H14M16 17H18" stroke="#555"/></svg><div class="pn" style="left:1247px;top:87px;width:852px;height:902px;"></div><div class="t tt" style="left:1507px;width:300px;text-align:center;top:61px;">2D Pattern Window</div><div class="ddb" style="left:1740px;top:63px;width:18px;height:18px"></div><svg style="left:1745.0px;top:70.0px" width="8" height="5"><path d="M0 0H8L4.0 5Z" fill="#8a8a8a"/></svg><div class="tbb" style="left:2082px;top:64px;width:16px;height:15px"></div><svg style="left:2082px;top:64px" width="16" height="15"><path d="M4 5H3.5V11.5H10.5V9" stroke="#8c8c8c" stroke-width="1.3" fill="none"/><path d="M7 8L12 3M9 3H12V6" stroke="#8c8c8c" stroke-width="1.3" fill="none"/></svg><div style="left:1247px;top:126px;width:852px;height:1.5px;background:#161616"></div><div style="left:1250px;top:130px;width:849px;height:859px;background:#fff"></div><div style="left:1256px;top:92px;width:1.2px;height:29px;background:#2a2a2a"></div><div style="left:1264px;top:89px;width:36px;height:36px;background:linear-gradient(#58585a,#404042);border:1px solid #111"></div><svg style="left:1268px;top:93px" width="10" height="10" viewBox="0 0 10 10"><path d="M1 1L8 7L4.5 7.2L1 9.5Z" fill="none" stroke="#aaa" stroke-width="0.9"/></svg><svg style="left:1275px;top:101px" width="17" height="16" viewBox="0 0 17 16"><path d="M16 1V15H1Z" fill="#f8c000"/></svg><svg style="left:1310px;top:96px" width="8" height="10"><path d="M0 0L7 6L3.5 6.2L0 9.5Z" fill="#a0a0a0"/></svg><svg style="left:1313px;top:101px" width="22" height="17" viewBox="0 0 22 17"><path d="M4 15L18 15L18 4" stroke="#bbb" stroke-width="0.9" fill="none"/><path d="M4 15L18 4" stroke="#bbb" stroke-width="0.9"/><circle cx="4" cy="15" r="2" fill="#ddd"/><circle cx="18" cy="15" r="2" fill="#ddd"/><circle cx="18" cy="4" r="2" fill="#ddd"/></svg><svg style="left:1333px;top:113px" width="5" height="5"><path d="M5 0V5H0Z" fill="#707070"/></svg><svg style="left:1355px;top:97px" width="24" height="20" viewBox="0 0 24 20"><rect x="2" y="2" width="20" height="15" fill="url(#gI)" opacity="0.8"/></svg><svg style="left:1376px;top:113px" width="5" height="5"><path d="M5 0V5H0Z" fill="#707070"/></svg><svg style="left:1397px;top:97px" width="26" height="20" viewBox="0 0 26 20"><rect x="1" y="1" width="22" height="17" fill="#777"/><path d="M4 4H13L19 10V15H4Z" fill="none" stroke="#ddd" stroke-width="1.4"/></svg><svg style="left:1419px;top:113px" width="5" height="5"><path d="M5 0V5H0Z" fill="#707070"/></svg><svg style="left:1440px;top:95px" width="24" height="24" viewBox="0 0 24 24"><circle cx="9" cy="4" r="2.5" fill="#bbb"/><path d="M5 8H13V15H11V22H9V15H7V22H5V15H3Z" fill="url(#gI)"/><rect x="13" y="11" width="7" height="7" fill="#999"/><rect x="15" y="8" width="3" height="4" fill="#aaa"/></svg><svg style="left:1480px;top:96px" width="28" height="22" viewBox="0 0 28 22"><path d="M10 2H18V8H10Z" fill="#8a8a8a"/><circle cx="5" cy="17" r="2.2" fill="#ddd"/><circle cx="20" cy="17" r="2.2" fill="#ddd"/><path d="M5 17H20" stroke="#ddd" stroke-width="1.3"/></svg><svg style="left:1504px;top:113px" width="5" height="5"><path d="M5 0V5H0Z" fill="#707070"/></svg><svg style="left:1523px;top:96px" width="8" height="10"><path d="M0 0L7 6L3.5 6.2L0 9.5Z" fill="#a0a0a0"/></svg><svg style="left:1528px;top:101px" width="24" height="17" viewBox="0 0 24 17"><path d="M4 2H23L20 15H1Z M8.5 2L6 15M14 2L11 15M19 2L16 15M3 6H22M2 10H21" stroke="#bbb" stroke-width="1.2" fill="none"/></svg><svg style="left:1546px;top:114px" width="5" height="5"><path d="M5 0V5H0Z" fill="#707070"/></svg><svg style="left:1566px;top:97px" width="26" height="20" viewBox="0 0 26 20"><path d="M3 15Q4 6 14 5H19L22 15Z" fill="url(#gI)"/><path d="M2 17H23" stroke="#777" stroke-width="2"/></svg><svg style="left:1607px;top:96px" width="8" height="10"><path d="M0 0L7 6L3.5 6.2L0 9.5Z" fill="#a0a0a0"/></svg><svg style="left:1611px;top:98px" width="24" height="22" viewBox="0 0 24 22"><path d="M4 8L9 4H15L20 8L18 12H16V20H8V12H6Z" fill="url(#gI)"/><path d="M10 4Q12 7 14 4" stroke="#333" fill="none"/></svg><svg style="left:1651px;top:96px" width="8" height="10"><path d="M0 0L7 6L3.5 6.2L0 9.5Z" fill="#a0a0a0"/></svg><svg style="left:1655px;top:98px" width="22" height="22" viewBox="0 0 22 22"><path d="M3 6L14 4V18L3 20Z" fill="#2a2a2a"/><path d="M5 8H8V11H5ZM8 11H11V14H8ZM5 14H8V17H5ZM11 6H13V9H11Z" fill="#ccc"/><path d="M14 4Q20 5 19 12Q18 19 12 20" stroke="#ddd" stroke-width="3" fill="none"/></svg><svg style="left:1693px;top:97px" width="26" height="22" viewBox="0 0 26 22"><path d="M2 3L7 5V19L2 17ZM8 5L13 3V17L8 19ZM14 3L19 5V19L14 17ZM20 5L24 3V17L20 19Z" fill="url(#gI)"/></svg><svg style="left:1716px;top:114px" width="5" height="5"><path d="M5 0V5H0Z" fill="#707070"/></svg><svg style="left:1735px;top:96px" width="8" height="10"><path d="M0 0L7 6L3.5 6.2L0 9.5Z" fill="#a0a0a0"/></svg><svg style="left:1740px;top:100px" width="22" height="18" viewBox="0 0 22 18"><path d="M2 16L20 2" stroke="#ddd" stroke-width="2.4" stroke-dasharray="3 1.5"/></svg><svg style="left:1758px;top:114px" width="5" height="5"><path d="M5 0V5H0Z" fill="#707070"/></svg><svg style="left:1778px;top:97px" width="26" height="22" viewBox="0 0 26 22"><path d="M3 7L9 2H17L23 7L20 11H18V20H8V11H6Z" fill="#8f8f8f"/><path d="M10 2Q13 6 16 2" stroke="#555" fill="none"/></svg><svg style="left:1250px;top:130px" width="849" height="859" viewBox="1250 130 849 859"><rect x="1250" y="308" width="849" height="114" fill="#c8c8c8"/><path d="M1478 308H1507V422H1459Q1474 390 1478 330Z" fill="#bababa"/><path d="M1507 308H1538L1512 372L1507 380Z" fill="#b6b6b6"/><path d="M1313.4 308V422" stroke="#bcbcbc" stroke-width="1"/><path d="M1378.1 308V422" stroke="#bcbcbc" stroke-width="1"/><path d="M1442.9 308V422" stroke="#bcbcbc" stroke-width="1"/><path d="M1507.6 308V422" stroke="#bcbcbc" stroke-width="1"/><path d="M1572.3 308V422" stroke="#bcbcbc" stroke-width="1"/><path d="M1637.1 308V422" stroke="#bcbcbc" stroke-width="1"/><path d="M1701.8 308V422" stroke="#bcbcbc" stroke-width="1"/><path d="M1766.5 308V422" stroke="#bcbcbc" stroke-width="1"/><path d="M1831.2 308V422" stroke="#bcbcbc" stroke-width="1"/><path d="M1896.0 308V422" stroke="#bcbcbc" stroke-width="1"/><path d="M1960.7 308V422" stroke="#bcbcbc" stroke-width="1"/><path d="M2025.4 308V422" stroke="#bcbcbc" stroke-width="1"/><path d="M2090.2 308V422" stroke="#bcbcbc" stroke-width="1"/><path d="M1250 320.5H2099" stroke="#bcbcbc" stroke-width="1"/><path d="M1250 385.5H2099" stroke="#bcbcbc" stroke-width="1"/><path d="M1507.5 308V422" stroke="#8a8a8a" stroke-width="1.2"/><rect x="1250" y="306" width="849" height="2.4" fill="#38b4f4"/><rect x="1250" y="421" width="849" height="2" fill="#f2a27c"/><path d="M1478 130L1250 431" stroke="#fff" stroke-width="1.5" fill="none"/><path d="M1466 130L2080.4 960.5" stroke="#fff" stroke-width="1.5" fill="none"/><path d="M1478 130L1250 431" stroke="#5a50f8" stroke-width="1.35" stroke-dasharray="3.5 2.5" fill="none"/><path d="M1466 130L2080.4 960.5" stroke="#5a50f8" stroke-width="1.35" stroke-dasharray="3.5 2.5" fill="none"/><path d="M1250 785.8L1439.2 822.6" stroke="#5a50f8" stroke-width="1.35" stroke-dasharray="3.5 2.5" fill="none"/><path d="M1556.7 826.8L1821 802.9" stroke="#5a50f8" stroke-width="1.35" stroke-dasharray="3.5 2.5" fill="none"/><circle cx="1439.2" cy="822.6" r="3" fill="#fff" stroke="#5a50f8" stroke-width="1.6"/><circle cx="1556.7" cy="826.8" r="3" fill="#fff" stroke="#5a50f8" stroke-width="1.6"/><circle cx="1821" cy="802.9" r="3" fill="#fff" stroke="#5a50f8" stroke-width="1.6"/><circle cx="2080.4" cy="960.5" r="3" fill="#fff" stroke="#5a50f8" stroke-width="1.6"/><circle cx="1505" cy="849.3" r="3.6" fill="#25264e"/></svg><div style="left:1263px;top:143px;width:27px;height:27px;border:1px solid #dcdcdc;box-shadow:1px 1px 1px #e4e4e4;background:#fff"></div><div style="left:1297px;top:143px;width:27px;height:27px;border:1px solid #dcdcdc;box-shadow:1px 1px 1px #e4e4e4;background:#fff"></div><div style="left:1330px;top:143px;width:27px;height:27px;border:1px solid #dcdcdc;box-shadow:1px 1px 1px #e4e4e4;background:#fff"></div><div style="left:1364px;top:143px;width:27px;height:27px;border:1px solid #dcdcdc;box-shadow:1px 1px 1px #e4e4e4;background:#fff"></div><div style="left:1398px;top:143px;width:27px;height:27px;border:1px solid #dcdcdc;box-shadow:1px 1px 1px #e4e4e4;background:#fff"></div><svg style="left:1263px;top:143px" width="27" height="27" viewBox="0 0 27 27"><path d="M7 4L23 17" stroke="#333" stroke-width="3" stroke-linecap="round"/><path d="M7 4Q4 8 5 15" stroke="#f0a050" stroke-width="0.8" fill="none"/><ellipse cx="8" cy="20" rx="5.5" ry="3" fill="#222"/><circle cx="8" cy="20" r="1.6" fill="#fff"/></svg><svg style="left:1297px;top:143px" width="27" height="27" viewBox="0 0 27 27"><path d="M4 9L10 5H17L23 9L21 13H19V22H8V13H6Z" fill="#f2f2f2" stroke="#ccc" stroke-width="0.8"/><ellipse cx="8" cy="21" rx="5.5" ry="3" fill="#222"/><circle cx="8" cy="21" r="1.6" fill="#fff"/></svg><svg style="left:1330px;top:143px" width="27" height="27" viewBox="0 0 27 27"><circle cx="15" cy="12" r="8.5" fill="#333"/><path d="M15 8V17" stroke="#f0a020" stroke-width="2.2"/><circle cx="15" cy="5.5" r="1.3" fill="#f0a020"/><ellipse cx="7" cy="21" rx="5.5" ry="3" fill="#222"/><circle cx="7" cy="21" r="1.6" fill="#fff"/></svg><svg style="left:1364px;top:143px" width="27" height="27" viewBox="0 0 27 27"><path d="M5 8L8 6V22L5 20Z" fill="#ddd"/><path d="M8 6L22 4L21 18L9 21Z" fill="#f5b400"/><path d="M8 21L21 18L23 22L10 23Z" fill="#ddd"/></svg><svg style="left:1398px;top:143px" width="27" height="27" viewBox="0 0 27 27"><path d="M4 9L10 5H17L23 9L21 13H19V21H8V13H6Z" fill="#aaa"/><rect x="4" y="16" width="7" height="8" fill="#999"/><path d="M5.5 16V13.5A2 2 0 0 1 9.5 13.5V16" stroke="#999" stroke-width="1.3" fill="none"/></svg><svg style="left:1431px;top:142px" width="27" height="28" viewBox="0 0 27 28"><path d="M13.5 2L20 9H16V14H11V9H7Z" fill="#777"/><path d="M2 14V22H25V14H21V18H6V14Z" fill="#777"/><path d="M8 19H10M12.5 19H14.5M17 19H19" stroke="#ccc" stroke-width="1.2"/></svg><div class="pn" style="left:1241px;top:989px;width:860px;height:6px;"></div><div class="pn" style="left:388px;top:991px;width:853px;height:4px;"></div><div class="pn" style="left:2099px;top:87px;width:2px;height:908px;"></div><div class="pn" style="left:2105px;top:85px;width:448px;height:253px;"></div><svg style="left:2108px;top:66px" width="10" height="10"><path d="M0 3H5V0L10 5L5 10V7H0Z" fill="#a8a8a8"/></svg><div style="left:2122px;top:63px;width:2px;height:16px;background:#1e1e1e"></div><div class="t tt" style="left:2162px;width:300px;text-align:center;top:61px;">Fabric</div><div class="ddb" style="left:2395px;top:63px;width:18px;height:18px"></div><svg style="left:2400.0px;top:70.0px" width="8" height="5"><path d="M0 0H8L4.0 5Z" fill="#8a8a8a"/></svg><div class="tbb" style="left:2516px;top:64px;width:16px;height:15px"></div><svg style="left:2516px;top:64px" width="16" height="15"><path d="M4 5H3.5V11.5H10.5V9" stroke="#8c8c8c" stroke-width="1.3" fill="none"/><path d="M7 8L12 3M9 3H12V6" stroke="#8c8c8c" stroke-width="1.3" fill="none"/></svg><div class="tbb" style="left:2534px;top:64px;width:15px;height:15px"></div><svg style="left:2534px;top:64px" width="15" height="15"><path d="M4 4L11 11M11 4L4 11" stroke="#8c8c8c" stroke-width="1.8"/></svg><svg style="left:2108px;top:346px" width="10" height="10"><path d="M0 3H5V0L10 5L5 10V7H0Z" fill="#a8a8a8"/></svg><div style="left:2122px;top:343px;width:2px;height:16px;background:#1e1e1e"></div><div class="t tt" style="left:2162px;width:300px;text-align:center;top:341px;">Property Editor</div><div class="ddb" style="left:2395px;top:343px;width:18px;height:18px"></div><svg style="left:2400.0px;top:350.0px" width="8" height="5"><path d="M0 0H8L4.0 5Z" fill="#8a8a8a"/></svg><div class="tbb" style="left:2516px;top:344px;width:16px;height:15px"></div><svg style="left:2516px;top:344px" width="16" height="15"><path d="M4 5H3.5V11.5H10.5V9" stroke="#8c8c8c" stroke-width="1.3" fill="none"/><path d="M7 8L12 3M9 3H12V6" stroke="#8c8c8c" stroke-width="1.3" fill="none"/></svg><div class="tbb" style="left:2534px;top:344px;width:15px;height:15px"></div><svg style="left:2534px;top:344px" width="15" height="15"><path d="M4 4L11 11M11 4L4 11" stroke="#8c8c8c" stroke-width="1.8"/></svg><div class="pn" style="left:2105px;top:365px;width:448px;height:626px;"></div><div style="left:2118px;top:98px;width:89px;height:33px;border:1px solid #5a5a5c;background:#3a3a3c"></div><div class="t" style="left:2012.5px;width:300px;text-align:center;top:104px;font-size:14px;color:#d8d8d8">增加</div><div style="left:2220px;top:98px;width:89px;height:33px;border:1px solid #5a5a5c;background:#3a3a3c"></div><div class="t" style="left:2114.5px;width:300px;text-align:center;top:104px;font-size:14px;color:#d8d8d8">复制</div><div style="left:2323px;top:98px;width:89px;height:33px;border:1px solid #5a5a5c;background:#3a3a3c"></div><div class="t" style="left:2217.5px;width:300px;text-align:center;top:104px;font-size:14px;color:#4e4e50">应用</div><div style="left:2425px;top:98px;width:114px;height:33px;border:1px solid #5a5a5c;background:#3a3a3c"></div><div class="t" style="left:2332.0px;width:300px;text-align:center;top:104px;font-size:14px;color:#d8d8d8">删除未使用的</div><div style="left:2118px;top:144px;width:422px;height:176px;background:#2d2d2d"></div><div style="left:2130px;top:156px;width:398px;height:69px;background:#343436"></div><svg style="left:2150px;top:182px" width="16" height="14"><path d="M2 7L6 11L14 2" stroke="#f5b800" stroke-width="3" fill="none"/></svg><div style="left:2186px;top:168px;width:43px;height:43px;background:#fff"></div><div class="t" style="left:2243px;top:180px;font-size:14px;color:#f5a623">FABRIC 1</div><div class="t" style="left:2133px;top:392px;font-size:14px;color:#cfcfcf">织物</div><div style="left:2275px;top:381px;width:103px;height:34px;border:1px solid #5a5a5c;background:#3a3a3c"></div><div class="t" style="left:2176px;width:300px;text-align:center;top:388px;font-size:14px;color:#d8d8d8">打开</div><div style="left:2390px;top:381px;width:103px;height:34px;border:1px solid #5a5a5c;background:#3a3a3c"></div><div class="t" style="left:2291px;width:300px;text-align:center;top:388px;font-size:14px;color:#d8d8d8">保存</div><div style="left:2518px;top:378px;width:22px;height:21px;background:#2d2d2d;border:1px solid #1f1f1f;border-radius:4px"></div><svg style="left:2525px;top:384px" width="8" height="6"><path d="M0 6H8L4 0Z" fill="#1c1c1c"/></svg><div style="left:2518px;top:401px;width:22px;height:553px;background:#242424;border-radius:3px"></div><div style="left:2519px;top:402px;width:20px;height:310px;background:#2f2f30;border-radius:3px"></div><div style="left:2526px;top:554px;width:6px;height:1.5px;background:#111"></div><div style="left:2526px;top:557px;width:6px;height:1.5px;background:#111"></div><div style="left:2526px;top:560px;width:6px;height:1.5px;background:#111"></div><div style="left:2518px;top:956px;width:22px;height:21px;background:#2d2d2d;border:1px solid #1f1f1f;border-radius:4px"></div><svg style="left:2525px;top:963px" width="8" height="6"><path d="M0 0H8L4 6Z" fill="#1c1c1c"/></svg><div style="left:2118px;top:426px;width:387px;height:1px;background:#2e2e30"></div><div style="left:2118px;top:427px;width:387px;height:1px;background:#454547"></div><svg style="left:2123px;top:440px" width="9" height="5"><path d="M0 0H9L4.5 5Z" fill="#777"/></svg><div class="t" style="left:2141px;top:432px;font-size:14px;color:#f5a623">信息</div><div style="left:2133px;top:457px;width:360px;height:1px;background:#2e2e30"></div><div style="left:2133px;top:458px;width:360px;height:1px;background:#454547"></div><div class="t" style="left:2148px;top:462px;font-size:14px;color:#cfcfcf">名字</div><div style="left:2334px;top:460px;width:158px;height:24px;background:#333335;border:1px solid #2d2d2f"></div><div class="t" style="left:2343px;top:462px;font-size:14px;color:#d0d0d0">FABRIC 1</div><div style="left:2133px;top:487px;width:360px;height:1px;background:#2e2e30"></div><div style="left:2133px;top:488px;width:360px;height:1px;background:#454547"></div><svg style="left:2140px;top:497px" width="6" height="9"><path d="M0 0V9L6 4.5Z" fill="#777"/></svg><div class="t" style="left:2155px;top:492px;font-size:14px;color:#cfcfcf">分类</div><div style="left:2334px;top:490px;width:158px;height:24px;background:#333335;border:1px solid #2d2d2f"></div><div class="t" style="left:2343px;top:492px;font-size:14px;color:#d0d0d0">None</div><div style="left:2118px;top:516px;width:387px;height:1px;background:#2e2e30"></div><div style="left:2118px;top:517px;width:387px;height:1px;background:#454547"></div><svg style="left:2125px;top:527px" width="6" height="9"><path d="M0 0V9L6 4.5Z" fill="#777"/></svg><div class="t" style="left:2141px;top:522px;font-size:14px;color:#f5a623">属性</div><div style="left:2350px;top:520px;width:142px;height:24px;background:#333335;border:1px solid #2d2d2f"></div><div class="t" style="left:2356px;top:522px;font-size:14px;color:#d0d0d0">PBR</div><div class="ddb" style="left:2473px;top:524px;width:18px;height:18px"></div><svg style="left:2478.0px;top:531.0px" width="8" height="5"><path d="M0 0H8L4.0 5Z" fill="#8a8a8a"/></svg><div style="left:2118px;top:546px;width:387px;height:1px;background:#2e2e30"></div><div style="left:2118px;top:547px;width:387px;height:1px;background:#454547"></div><svg style="left:2123px;top:560px" width="9" height="5"><path d="M0 0H9L4.5 5Z" fill="#777"/></svg><div class="t" style="left:2141px;top:552px;font-size:14px;color:#f5a623">物理属性</div><div style="left:2133px;top:576px;width:360px;height:1px;background:#2e2e30"></div><div style="left:2133px;top:577px;width:360px;height:1px;background:#454547"></div><svg style="left:2138px;top:590px" width="9" height="5"><path d="M0 0H9L4.5 5Z" fill="#777"/></svg><div class="t" style="left:2155px;top:582px;font-size:14px;color:#cfcfcf">预设</div><div style="left:2226px;top:580px;width:214px;height:24px;background:#333335;border:1px solid #2d2d2f"></div><div class="t" style="left:2232px;top:582px;font-size:14px;color:#d0d0d0">Custom</div><div class="ddb" style="left:2420px;top:584px;width:18px;height:19px"></div><svg style="left:2425.0px;top:591.5px" width="8" height="5"><path d="M0 0H8L4.0 5Z" fill="#8a8a8a"/></svg><div style="left:2443px;top:580px;width:22px;height:24px;background:#3a3a3c;border:1px solid #2a2a2a"></div><svg style="left:2443px;top:580px" width="22" height="24"><path d="M4 8H9L10 9.5H18V17H4Z" fill="#888"/><path d="M4 11H18V18H4Z" fill="#a0a0a0"/></svg><div style="left:2469px;top:580px;width:22px;height:24px;background:#3a3a3c;border:1px solid #2a2a2a"></div><svg style="left:2469px;top:580px" width="22" height="24"><path d="M5 6H15L17 8V18H5Z" fill="#999"/><rect x="8" y="6" width="6" height="4" fill="#3a3a3c"/></svg><div style="left:2148px;top:606px;width:345px;height:1px;background:#2e2e30"></div><div style="left:2148px;top:607px;width:345px;height:1px;background:#454547"></div><svg style="left:2155px;top:630px" width="6" height="9"><path d="M0 0V9L6 4.5Z" fill="#666"/></svg><div class="t" style="left:2170px;top:623.5px;font-size:14px;color:#cfcfcf">纬纱-强度</div><div style="left:2375px;top:610px;width:117px;height:24px;background:#333335;border:1px solid #2d2d2f"></div><div class="t" style="left:2381px;top:613.5px;font-size:14px;color:#cfcfcf">41.0</div><div style="left:2380px;top:644px;width:112px;height:2px;background:#1c1c1c"></div><div style="left:2380px;top:645px;width:112px;height:1px;background:#4a4a4a"></div><div style="left:2380px;top:643px;width:47px;height:4px;background:#f5c21a"></div><svg style="left:2422.4px;top:637px" width="9" height="13"><path d="M1 4L4.5 0.5L8 4V12H1Z" fill="url(#gHd)" stroke="#333" stroke-width="0.8"/></svg><div style="left:2148px;top:660px;width:345px;height:1px;background:#2e2e30"></div><div style="left:2148px;top:661px;width:345px;height:1px;background:#454547"></div><svg style="left:2155px;top:684px" width="6" height="9"><path d="M0 0V9L6 4.5Z" fill="#666"/></svg><div class="t" style="left:2170px;top:677.3px;font-size:14px;color:#cfcfcf">经纱-强度</div><div style="left:2375px;top:663px;width:117px;height:24px;background:#333335;border:1px solid #2d2d2f"></div><div class="t" style="left:2381px;top:667.3px;font-size:14px;color:#cfcfcf">37.0</div><div style="left:2380px;top:698px;width:112px;height:2px;background:#1c1c1c"></div><div style="left:2380px;top:699px;width:112px;height:1px;background:#4a4a4a"></div><div style="left:2380px;top:697px;width:43px;height:4px;background:#f5c21a"></div><svg style="left:2418.2px;top:691px" width="9" height="13"><path d="M1 4L4.5 0.5L8 4V12H1Z" fill="url(#gHd)" stroke="#333" stroke-width="0.8"/></svg><div style="left:2148px;top:714px;width:345px;height:1px;background:#2e2e30"></div><div style="left:2148px;top:715px;width:345px;height:1px;background:#454547"></div><svg style="left:2155px;top:738px" width="6" height="9"><path d="M0 0V9L6 4.5Z" fill="#666"/></svg><div class="t" style="left:2170px;top:731.1px;font-size:14px;color:#cfcfcf">对角线张力</div><div style="left:2375px;top:717px;width:117px;height:24px;background:#333335;border:1px solid #2d2d2f"></div><div class="t" style="left:2381px;top:721.1px;font-size:14px;color:#cfcfcf">24.0</div><div style="left:2380px;top:752px;width:112px;height:2px;background:#1c1c1c"></div><div style="left:2380px;top:753px;width:112px;height:1px;background:#4a4a4a"></div><div style="left:2380px;top:751px;width:29px;height:4px;background:#f5c21a"></div><svg style="left:2404.6px;top:745px" width="9" height="13"><path d="M1 4L4.5 0.5L8 4V12H1Z" fill="url(#gHd)" stroke="#333" stroke-width="0.8"/></svg><div style="left:2148px;top:768px;width:345px;height:1px;background:#2e2e30"></div><div style="left:2148px;top:769px;width:345px;height:1px;background:#454547"></div><svg style="left:2155px;top:792px" width="6" height="9"><path d="M0 0V9L6 4.5Z" fill="#666"/></svg><div class="t" style="left:2170px;top:784.9px;font-size:14px;color:#cfcfcf">弯曲强度-纬纱</div><div style="left:2375px;top:771px;width:117px;height:24px;background:#333335;border:1px solid #2d2d2f"></div><div class="t" style="left:2381px;top:774.9px;font-size:14px;color:#cfcfcf">58.0</div><div style="left:2380px;top:806px;width:112px;height:2px;background:#1c1c1c"></div><div style="left:2380px;top:807px;width:112px;height:1px;background:#4a4a4a"></div><div style="left:2380px;top:805px;width:65px;height:4px;background:#f5c21a"></div><svg style="left:2440.2px;top:799px" width="9" height="13"><path d="M1 4L4.5 0.5L8 4V12H1Z" fill="url(#gHd)" stroke="#333" stroke-width="0.8"/></svg><div style="left:2148px;top:822px;width:345px;height:1px;background:#2e2e30"></div><div style="left:2148px;top:823px;width:345px;height:1px;background:#454547"></div><svg style="left:2155px;top:846px" width="6" height="9"><path d="M0 0V9L6 4.5Z" fill="#666"/></svg><div class="t" style="left:2170px;top:838.7px;font-size:14px;color:#cfcfcf">弯曲强度-经纱</div><div style="left:2375px;top:825px;width:117px;height:24px;background:#333335;border:1px solid #2d2d2f"></div><div class="t" style="left:2381px;top:828.7px;font-size:14px;color:#cfcfcf">76.0</div><div style="left:2380px;top:860px;width:112px;height:2px;background:#1c1c1c"></div><div style="left:2380px;top:861px;width:112px;height:1px;background:#4a4a4a"></div><div style="left:2380px;top:859px;width:83px;height:4px;background:#f5c21a"></div><svg style="left:2459.0px;top:853px" width="9" height="13"><path d="M1 4L4.5 0.5L8 4V12H1Z" fill="url(#gHd)" stroke="#333" stroke-width="0.8"/></svg><div style="left:2148px;top:876px;width:345px;height:1px;background:#2e2e30"></div><div style="left:2148px;top:877px;width:345px;height:1px;background:#454547"></div><svg style="left:2155px;top:900px" width="6" height="9"><path d="M0 0V9L6 4.5Z" fill="#666"/></svg><div class="t" style="left:2170px;top:892.5px;font-size:14px;color:#cfcfcf">弯曲强度</div><div style="left:2375px;top:878px;width:117px;height:24px;background:#333335;border:1px solid #2d2d2f"></div><div class="t" style="left:2381px;top:882.5px;font-size:14px;color:#cfcfcf">69.0</div><div style="left:2380px;top:914px;width:112px;height:2px;background:#1c1c1c"></div><div style="left:2380px;top:915px;width:112px;height:1px;background:#4a4a4a"></div><div style="left:2380px;top:913px;width:76px;height:4px;background:#f5c21a"></div><svg style="left:2451.7px;top:907px" width="9" height="13"><path d="M1 4L4.5 0.5L8 4V12H1Z" fill="url(#gHd)" stroke="#333" stroke-width="0.8"/></svg><div style="left:2148px;top:929px;width:345px;height:1px;background:#2e2e30"></div><div style="left:2148px;top:930px;width:345px;height:1px;background:#454547"></div><svg style="left:2155px;top:953px" width="6" height="9"><path d="M0 0V9L6 4.5Z" fill="#666"/></svg><div class="t" style="left:2170px;top:946.3px;font-size:14px;color:#cfcfcf">变形率-纬纱</div><div style="left:2375px;top:932px;width:117px;height:24px;background:#333335;border:1px solid #2d2d2f"></div><div class="t" style="left:2381px;top:936.3px;font-size:14px;color:#cfcfcf">0</div><div style="left:2380px;top:967px;width:112px;height:2px;background:#1c1c1c"></div><div style="left:2380px;top:968px;width:112px;height:1px;background:#4a4a4a"></div><svg style="left:2379.5px;top:960px" width="9" height="13"><path d="M1 4L4.5 0.5L8 4V12H1Z" fill="url(#gHd)" stroke="#333" stroke-width="0.8"/></svg><svg width="0" height="0"><defs><linearGradient id="gHd" x1="0" y1="0" x2="1" y2="0"><stop offset="0" stop-color="#eee"/><stop offset="1" stop-color="#888"/></linearGradient></defs></svg><div class="pn" style="left:45px;top:1027px;width:2508px;height:364px;"></div><svg style="left:1281px;top:1005px" width="17" height="15"><path d="M1 2.5H16L8.5 13.5Z" fill="#1e1e1e"/><path d="M1 0.5H16L8.5 11Z" fill="url(#gTri)"/><defs><linearGradient id="gTri" x1="0" y1="0" x2="0" y2="1"><stop offset="0" stop-color="#9a9a9a"/><stop offset="1" stop-color="#606060"/></linearGradient></defs></svg><div class="tbb" style="left:2535px;top:1005px;width:16px;height:15px"></div><svg style="left:2535px;top:1005px" width="16" height="15"><path d="M4 5H3.5V11.5H10.5V9" stroke="#8c8c8c" stroke-width="1.3" fill="none"/><path d="M7 8L12 3M9 3H12V6" stroke="#8c8c8c" stroke-width="1.3" fill="none"/></svg><svg style="left:71px;top:1043px" width="24" height="24"><circle cx="12" cy="12" r="9.5" stroke="#8c8c8c" stroke-width="2.5" fill="none"/><circle cx="12" cy="12" r="4.5" fill="#8c8c8c"/></svg><div style="left:112px;top:1040px;width:1px;height:31px;background:#313133"></div><div style="left:113px;top:1040px;width:1px;height:31px;background:#48484a"></div><div style="left:399px;top:1040px;width:1px;height:31px;background:#313133"></div><div style="left:400px;top:1040px;width:1px;height:31px;background:#48484a"></div><div style="left:454px;top:1040px;width:1px;height:31px;background:#313133"></div><div style="left:455px;top:1040px;width:1px;height:31px;background:#48484a"></div><div style="left:734px;top:1040px;width:1px;height:31px;background:#313133"></div><div style="left:735px;top:1040px;width:1px;height:31px;background:#48484a"></div><svg style="left:126px;top:1046px" width="26" height="18"><path d="M1 2H4V16H1Z M4 9L14 2V16Z M13 9L23 2V16Z" fill="#8a8a8a"/></svg><svg style="left:169px;top:1046px" width="20" height="18"><path d="M1 2H5V16H1Z M5 9L18 2V16Z" fill="#8a8a8a"/></svg><svg style="left:207px;top:1046px" width="18" height="18"><path d="M2 2L16 9L2 16Z" fill="#8a8a8a"/></svg><svg style="left:245px;top:1046px" width="20" height="18"><path d="M1 2L14 9L1 16Z M14 2H18V16H14Z" fill="#8a8a8a"/></svg><svg style="left:282px;top:1046px" width="26" height="18"><path d="M1 2L10 9L1 16Z M10 2L19 9L10 16Z M20 2H23V16H20Z" fill="#8a8a8a"/></svg><svg style="left:323px;top:1046px" width="18" height="18"><path d="M14.5 8A6 6 0 1 0 14 12" stroke="#8a8a8a" stroke-width="3" fill="none"/><path d="M10 7L17 3V10Z" fill="#8a8a8a"/></svg><div class="t" style="left:358px;top:1046px;font-size:19px;color:#858585;letter-spacing:0px">1X</div><svg style="left:416px;top:1045px" width="20" height="21"><path d="M3 4H17" stroke="#8a8a8a" stroke-width="2"/><path d="M7 2H13" stroke="#8a8a8a" stroke-width="1.5"/><path d="M4.5 6H15.5L14 19H6Z" stroke="#8a8a8a" stroke-width="1.8" fill="none"/><path d="M5.5 12H14.5L14 18H6Z" fill="#8a8a8a"/></svg><div class="t" style="left:467px;top:1046px;font-size:14px;color:#cfcfcf">模拟品质</div><div style="left:533px;top:1044px;width:131px;height:24px;background:#333335;border:1px solid #2d2d2f"></div><div class="t" style="left:538px;top:1046px;font-size:14px;color:#cfcfcf">普通速度（默认）</div><div class="ddb" style="left:645px;top:1047px;width:18px;height:19px"></div><svg style="left:650.0px;top:1054.5px" width="8" height="5"><path d="M0 0H8L4.0 5Z" fill="#8a8a8a"/></svg><div style="left:675px;top:1044px;width:46px;height:24px;background:#333335;border:1px solid #2d2d2f"></div><div class="t" style="left:682px;top:1046px;font-size:14px;color:#cfcfcf">1</div><svg style="left:703px;top:1045px" width="18" height="22"><path d="M4 9L9 3L14 9Z M4 13L9 19L14 13Z" fill="#888"/></svg><svg style="left:748px;top:1044px" width="26" height="26"><g fill="#888"><circle cx="8" cy="8" r="4.5"/><circle cx="16" cy="16" r="6"/></g><g stroke="#888" stroke-width="2.2"><path d="M8 1.5V14.5M1.5 8H14.5M3.5 3.5L12.5 12.5M12.5 3.5L3.5 12.5"/><path d="M16 7.5V24.5M7.5 16H24.5M10 10L22 22M22 10L10 22"/></g><circle cx="8" cy="8" r="1.8" fill="#3d3d3f"/><circle cx="16" cy="16" r="2.5" fill="#3d3d3f"/></svg><div style="left:58px;top:1084px;width:2264px;height:1px;background:#333335"></div><div style="left:58px;top:1085px;width:2264px;height:1px;background:#4a4a4c"></div><svg style="left:98px;top:1104px" width="30" height="14"><path d="M2 6H10V13H2Z" fill="#777"/><path d="M3.5 6V4A2.5 2.5 0 0 1 8.5 4V6" stroke="#777" stroke-width="1.4" fill="none"/><ellipse cx="23" cy="8" rx="6" ry="3.6" stroke="#777" stroke-width="1.4" fill="none"/><circle cx="23" cy="8" r="1.8" fill="#777"/></svg><div style="left:58px;top:1124px;width:415px;height:197px;background:#2d2d2d"></div><div style="left:473px;top:1124px;width:3px;height:200px;background:#3a3a3c"></div><div style="left:476px;top:1124px;width:168px;height:200px;background:#2d2d2d"></div><div style="left:644px;top:1122px;width:1678px;height:202px;background:#373737"></div><div style="left:644px;top:1122px;width:1678px;height:4px;background:#303030"></div><div style="left:644px;top:1151px;width:1678px;height:5px;background:#303030"></div><div style="left:644px;top:1126px;width:1678px;height:25px;background:#fea5a5"></div><div style="left:644px;top:1156px;width:1678px;height:25px;background:#7272fe"></div><div style="left:74px;top:1131px;width:13px;height:13px;background:#fea5a5"></div><div style="left:74px;top:1161px;width:13px;height:13px;background:#7272fe"></div><svg style="left:95px;top:1131px" width="36" height="14"><circle cx="7" cy="7" r="5.5" stroke="#8a8a8a" stroke-width="1" fill="none"/><circle cx="27" cy="7" r="5.5" fill="#f5c000"/></svg><svg style="left:95px;top:1161px" width="36" height="14"><circle cx="7" cy="7" r="5.5" stroke="#8a8a8a" stroke-width="1" fill="none"/><circle cx="27" cy="7" r="5.5" fill="#f5c000"/></svg><div class="t" style="left:146px;top:1128px;font-size:14px;color:#d0d0d0">服装</div><div class="t" style="left:146px;top:1158px;font-size:14px;color:#d0d0d0">Ch36Shape</div><svg style="left:470px;top:1100px" width="1860" height="24" viewBox="470 1100 1860 24"><rect x="644" y="1116" width="1678" height="6" fill="#a4894c"/><path d="M477.5 1115V1122" stroke="#c4c4c4" stroke-width="1.2"/><path d="M482.5 1118V1122" stroke="#c4c4c4" stroke-width="1.2"/><path d="M488.5 1118V1122" stroke="#c4c4c4" stroke-width="1.2"/><path d="M493.5 1118V1122" stroke="#c4c4c4" stroke-width="1.2"/><path d="M499.5 1118V1122" stroke="#c4c4c4" stroke-width="1.2"/><path d="M505.5 1118V1122" stroke="#c4c4c4" stroke-width="1.2"/><path d="M510.5 1118V1122" stroke="#c4c4c4" stroke-width="1.2"/><path d="M516.5 1118V1122" stroke="#c4c4c4" stroke-width="1.2"/><path d="M521.5 1118V1122" stroke="#c4c4c4" stroke-width="1.2"/><path d="M527.5 1118V1122" stroke="#c4c4c4" stroke-width="1.2"/><path d="M532.5 1115V1122" stroke="#c4c4c4" stroke-width="1.2"/><path d="M538.5 1118V1122" stroke="#c4c4c4" stroke-width="1.2"/><path d="M544.5 1118V1122" stroke="#c4c4c4" stroke-width="1.2"/><path d="M549.5 1118V1122" stroke="#c4c4c4" stroke-width="1.2"/><path d="M555.5 1118V1122" stroke="#c4c4c4" stroke-width="1.2"/><path d="M560.5 1118V1122" stroke="#c4c4c4" stroke-width="1.2"/><path d="M566.5 1118V1122" stroke="#c4c4c4" stroke-width="1.2"/><path d="M571.5 1118V1122" stroke="#c4c4c4" stroke-width="1.2"/><path d="M577.5 1118V1122" stroke="#c4c4c4" stroke-width="1.2"/><path d="M583.5 1118V1122" stroke="#c4c4c4" stroke-width="1.2"/><path d="M588.5 1115V1122" stroke="#c4c4c4" stroke-width="1.2"/><path d="M594.5 1118V1122" stroke="#c4c4c4" stroke-width="1.2"/><path d="M599.5 1118V1122" stroke="#c4c4c4" stroke-width="1.2"/><path d="M605.5 1118V1122" stroke="#c4c4c4" stroke-width="1.2"/><path d="M611.5 1118V1122" stroke="#c4c4c4" stroke-width="1.2"/><path d="M616.5 1118V1122" stroke="#c4c4c4" stroke-width="1.2"/><path d="M622.5 1118V1122" stroke="#c4c4c4" stroke-width="1.2"/><path d="M627.5 1118V1122" stroke="#c4c4c4" stroke-width="1.2"/><path d="M633.5 1118V1122" stroke="#c4c4c4" stroke-width="1.2"/><path d="M638.5 1118V1122" stroke="#c4c4c4" stroke-width="1.2"/><path d="M644.5 1114V1122" stroke="#ead9a2" stroke-width="1.3"/><path d="M650.5 1118V1121" stroke="#ead9a2" stroke-width="1.3"/><path d="M655.5 1118V1121" stroke="#ead9a2" stroke-width="1.3"/><path d="M661.5 1118V1121" stroke="#ead9a2" stroke-width="1.3"/><path d="M666.5 1118V1121" stroke="#ead9a2" stroke-width="1.3"/><path d="M672.5 1118V1121" stroke="#ead9a2" stroke-width="1.3"/><path d="M677.5 1118V1121" stroke="#ead9a2" stroke-width="1.3"/><path d="M683.5 1118V1121" stroke="#ead9a2" stroke-width="1.3"/><path d="M689.5 1118V1121" stroke="#ead9a2" stroke-width="1.3"/><path d="M694.5 1118V1121" stroke="#ead9a2" stroke-width="1.3"/><path d="M700.5 1114V1122" stroke="#ead9a2" stroke-width="1.3"/><path d="M705.5 1118V1121" stroke="#ead9a2" stroke-width="1.3"/><path d="M711.5 1118V1121" stroke="#ead9a2" stroke-width="1.3"/><path d="M717.5 1118V1121" stroke="#ead9a2" stroke-width="1.3"/><path d="M722.5 1118V1121" stroke="#ead9a2" stroke-width="1.3"/><path d="M728.5 1118V1121" stroke="#ead9a2" stroke-width="1.3"/><path d="M733.5 1118V1121" stroke="#ead9a2" stroke-width="1.3"/><path d="M739.5 1118V1121" stroke="#ead9a2" stroke-width="1.3"/><path d="M744.5 1118V1121" stroke="#ead9a2" stroke-width="1.3"/><path d="M750.5 1118V1121" stroke="#ead9a2" stroke-width="1.3"/><path d="M756.5 1114V1122" stroke="#ead9a2" stroke-width="1.3"/><path d="M761.5 1118V1121" stroke="#ead9a2" stroke-width="1.3"/><path d="M767.5 1118V1121" stroke="#ead9a2" stroke-width="1.3"/><path d="M772.5 1118V1121" stroke="#ead9a2" stroke-width="1.3"/><path d="M778.5 1118V1121" stroke="#ead9a2" stroke-width="1.3"/><path d="M783.5 1118V1121" stroke="#ead9a2" stroke-width="1.3"/><path d="M789.5 1118V1121" stroke="#ead9a2" stroke-width="1.3"/><path d="M795.5 1118V1121" stroke="#ead9a2" stroke-width="1.3"/><path d="M800.5 1118V1121" stroke="#ead9a2" stroke-width="1.3"/><path d="M806.5 1118V1121" stroke="#ead9a2" stroke-width="1.3"/><path d="M811.5 1114V1122" stroke="#ead9a2" stroke-width="1.3"/><path d="M817.5 1118V1121" stroke="#ead9a2" stroke-width="1.3"/><path d="M822.5 1118V1121" stroke="#ead9a2" stroke-width="1.3"/><path d="M828.5 1118V1121" stroke="#ead9a2" stroke-width="1.3"/><path d="M834.5 1118V1121" stroke="#ead9a2" stroke-width="1.3"/><path d="M839.5 1118V1121" stroke="#ead9a2" stroke-width="1.3"/><path d="M845.5 1118V1121" stroke="#ead9a2" stroke-width="1.3"/><path d="M850.5 1118V1121" stroke="#ead9a2" stroke-width="1.3"/><path d="M856.5 1118V1121" stroke="#ead9a2" stroke-width="1.3"/><path d="M862.5 1118V1121" stroke="#ead9a2" stroke-width="1.3"/><path d="M867.5 1114V1122" stroke="#ead9a2" stroke-width="1.3"/><path d="M873.5 1118V1121" stroke="#ead9a2" stroke-width="1.3"/><path d="M878.5 1118V1121" stroke="#ead9a2" stroke-width="1.3"/><path d="M884.5 1118V1121" stroke="#ead9a2" stroke-width="1.3"/><path d="M889.5 1118V1121" stroke="#ead9a2" stroke-width="1.3"/><path d="M895.5 1118V1121" stroke="#ead9a2" stroke-width="1.3"/><path d="M901.5 1118V1121" stroke="#ead9a2" stroke-width="1.3"/><path d="M906.5 1118V1121" stroke="#ead9a2" stroke-width="1.3"/><path d="M912.5 1118V1121" stroke="#ead9a2" stroke-width="1.3"/><path d="M917.5 1118V1121" stroke="#ead9a2" stroke-width="1.3"/><path d="M923.5 1114V1122" stroke="#ead9a2" stroke-width="1.3"/><path d="M928.5 1118V1121" stroke="#ead9a2" stroke-width="1.3"/><path d="M934.5 1118V1121" stroke="#ead9a2" stroke-width="1.3"/><path d="M940.5 1118V1121" stroke="#ead9a2" stroke-width="1.3"/><path d="M945.5 1118V1121" stroke="#ead9a2" stroke-width="1.3"/><path d="M951.5 1118V1121" stroke="#ead9a2" stroke-width="1.3"/><path d="M956.5 1118V1121" stroke="#ead9a2" stroke-width="1.3"/><path d="M962.5 1118V1121" stroke="#ead9a2" stroke-width="1.3"/><path d="M967.5 1118V1121" stroke="#ead9a2" stroke-width="1.3"/><path d="M973.5 1118V1121" stroke="#ead9a2" stroke-width="1.3"/><path d="M979.5 1114V1122" stroke="#ead9a2" stroke-width="1.3"/><path d="M984.5 1118V1121" stroke="#ead9a2" stroke-width="1.3"/><path d="M990.5 1118V1121" stroke="#ead9a2" stroke-width="1.3"/><path d="M995.5 1118V1121" stroke="#ead9a2" stroke-width="1.3"/><path d="M1001.5 1118V1121" stroke="#ead9a2" stroke-width="1.3"/><path d="M1007.5 1118V1121" stroke="#ead9a2" stroke-width="1.3"/><path d="M1012.5 1118V1121" stroke="#ead9a2" stroke-width="1.3"/><path d="M1018.5 1118V1121" stroke="#ead9a2" stroke-width="1.3"/><path d="M1023.5 1118V1121" stroke="#ead9a2" stroke-width="1.3"/><path d="M1029.5 1118V1121" stroke="#ead9a2" stroke-width="1.3"/><path d="M1034.5 1114V1122" stroke="#ead9a2" stroke-width="1.3"/><path d="M1040.5 1118V1121" stroke="#ead9a2" stroke-width="1.3"/><path d="M1046.5 1118V1121" stroke="#ead9a2" stroke-width="1.3"/><path d="M1051.5 1118V1121" stroke="#ead9a2" stroke-width="1.3"/><path d="M1057.5 1118V1121" stroke="#ead9a2" stroke-width="1.3"/><path d="M1062.5 1118V1121" stroke="#ead9a2" stroke-width="1.3"/><path d="M1068.5 1118V1121" stroke="#ead9a2" stroke-width="1.3"/><path d="M1073.5 1118V1121" stroke="#ead9a2" stroke-width="1.3"/><path d="M1079.5 1118V1121" stroke="#ead9a2" stroke-width="1.3"/><path d="M1085.5 1118V1121" stroke="#ead9a2" stroke-width="1.3"/><path d="M1090.5 1114V1122" stroke="#ead9a2" stroke-width="1.3"/><path d="M1096.5 1118V1121" stroke="#ead9a2" stroke-width="1.3"/><path d="M1101.5 1118V1121" stroke="#ead9a2" stroke-width="1.3"/><path d="M1107.5 1118V1121" stroke="#ead9a2" stroke-width="1.3"/><path d="M1112.5 1118V1121" stroke="#ead9a2" stroke-width="1.3"/><path d="M1118.5 1118V1121" stroke="#ead9a2" stroke-width="1.3"/><path d="M1124.5 1118V1121" stroke="#ead9a2" stroke-width="1.3"/><path d="M1129.5 1118V1121" stroke="#ead9a2" stroke-width="1.3"/><path d="M1135.5 1118V1121" stroke="#ead9a2" stroke-width="1.3"/><path d="M1140.5 1118V1121" stroke="#ead9a2" stroke-width="1.3"/><path d="M1146.5 1114V1122" stroke="#ead9a2" stroke-width="1.3"/><path d="M1152.5 1118V1121" stroke="#ead9a2" stroke-width="1.3"/><path d="M1157.5 1118V1121" stroke="#ead9a2" stroke-width="1.3"/><path d="M1163.5 1118V1121" stroke="#ead9a2" stroke-width="1.3"/><path d="M1168.5 1118V1121" stroke="#ead9a2" stroke-width="1.3"/><path d="M1174.5 1118V1121" stroke="#ead9a2" stroke-width="1.3"/><path d="M1179.5 1118V1121" stroke="#ead9a2" stroke-width="1.3"/><path d="M1185.5 1118V1121" stroke="#ead9a2" stroke-width="1.3"/><path d="M1191.5 1118V1121" stroke="#ead9a2" stroke-width="1.3"/><path d="M1196.5 1118V1121" stroke="#ead9a2" stroke-width="1.3"/><path d="M1202.5 1114V1122" stroke="#ead9a2" stroke-width="1.3"/><path d="M1207.5 1118V1121" stroke="#ead9a2" stroke-width="1.3"/><path d="M1213.5 1118V1121" stroke="#ead9a2" stroke-width="1.3"/><path d="M1218.5 1118V1121" stroke="#ead9a2" stroke-width="1.3"/><path d="M1224.5 1118V1121" stroke="#ead9a2" stroke-width="1.3"/><path d="M1230.5 1118V1121" stroke="#ead9a2" stroke-width="1.3"/><path d="M1235.5 1118V1121" stroke="#ead9a2" stroke-width="1.3"/><path d="M1241.5 1118V1121" stroke="#ead9a2" stroke-width="1.3"/><path d="M1246.5 1118V1121" stroke="#ead9a2" stroke-width="1.3"/><path d="M1252.5 1118V1121" stroke="#ead9a2" stroke-width="1.3"/><path d="M1257.5 1114V1122" stroke="#ead9a2" stroke-width="1.3"/><path d="M1263.5 1118V1121" stroke="#ead9a2" stroke-width="1.3"/><path d="M1269.5 1118V1121" stroke="#ead9a2" stroke-width="1.3"/><path d="M1274.5 1118V1121" stroke="#ead9a2" stroke-width="1.3"/><path d="M1280.5 1118V1121" stroke="#ead9a2" stroke-width="1.3"/><path d="M1285.5 1118V1121" stroke="#ead9a2" stroke-width="1.3"/><path d="M1291.5 1118V1121" stroke="#ead9a2" stroke-width="1.3"/><path d="M1297.5 1118V1121" stroke="#ead9a2" stroke-width="1.3"/><path d="M1302.5 1118V1121" stroke="#ead9a2" stroke-width="1.3"/><path d="M1308.5 1118V1121" stroke="#ead9a2" stroke-width="1.3"/><path d="M1313.5 1114V1122" stroke="#ead9a2" stroke-width="1.3"/><path d="M1319.5 1118V1121" stroke="#ead9a2" stroke-width="1.3"/><path d="M1324.5 1118V1121" stroke="#ead9a2" stroke-width="1.3"/><path d="M1330.5 1118V1121" stroke="#ead9a2" stroke-width="1.3"/><path d="M1336.5 1118V1121" stroke="#ead9a2" stroke-width="1.3"/><path d="M1341.5 1118V1121" stroke="#ead9a2" stroke-width="1.3"/><path d="M1347.5 1118V1121" stroke="#ead9a2" stroke-width="1.3"/><path d="M1352.5 1118V1121" stroke="#ead9a2" stroke-width="1.3"/><path d="M1358.5 1118V1121" stroke="#ead9a2" stroke-width="1.3"/><path d="M1363.5 1118V1121" stroke="#ead9a2" stroke-width="1.3"/><path d="M1369.5 1114V1122" stroke="#ead9a2" stroke-width="1.3"/><path d="M1375.5 1118V1121" stroke="#ead9a2" stroke-width="1.3"/><path d="M1380.5 1118V1121" stroke="#ead9a2" stroke-width="1.3"/><path d="M1386.5 1118V1121" stroke="#ead9a2" stroke-width="1.3"/><path d="M1391.5 1118V1121" stroke="#ead9a2" stroke-width="1.3"/><path d="M1397.5 1118V1121" stroke="#ead9a2" stroke-width="1.3"/><path d="M1402.5 1118V1121" stroke="#ead9a2" stroke-width="1.3"/><path d="M1408.5 1118V1121" stroke="#ead9a2" stroke-width="1.3"/><path d="M1414.5 1118V1121" stroke="#ead9a2" stroke-width="1.3"/><path d="M1419.5 1118V1121" stroke="#ead9a2" stroke-width="1.3"/><path d="M1425.5 1114V1122" stroke="#ead9a2" stroke-width="1.3"/><path d="M1430.5 1118V1121" stroke="#ead9a2" stroke-width="1.3"/><path d="M1436.5 1118V1121" stroke="#ead9a2" stroke-width="1.3"/><path d="M1442.5 1118V1121" stroke="#ead9a2" stroke-width="1.3"/><path d="M1447.5 1118V1121" stroke="#ead9a2" stroke-width="1.3"/><path d="M1453.5 1118V1121" stroke="#ead9a2" stroke-width="1.3"/><path d="M1458.5 1118V1121" stroke="#ead9a2" stroke-width="1.3"/><path d="M1464.5 1118V1121" stroke="#ead9a2" stroke-width="1.3"/><path d="M1469.5 1118V1121" stroke="#ead9a2" stroke-width="1.3"/><path d="M1475.5 1118V1121" stroke="#ead9a2" stroke-width="1.3"/><path d="M1481.5 1114V1122" stroke="#ead9a2" stroke-width="1.3"/><path d="M1486.5 1118V1121" stroke="#ead9a2" stroke-width="1.3"/><path d="M1492.5 1118V1121" stroke="#ead9a2" stroke-width="1.3"/><path d="M1497.5 1118V1121" stroke="#ead9a2" stroke-width="1.3"/><path d="M1503.5 1118V1121" stroke="#ead9a2" stroke-width="1.3"/><path d="M1508.5 1118V1121" stroke="#ead9a2" stroke-width="1.3"/><path d="M1514.5 1118V1121" stroke="#ead9a2" stroke-width="1.3"/><path d="M1520.5 1118V1121" stroke="#ead9a2" stroke-width="1.3"/><path d="M1525.5 1118V1121" stroke="#ead9a2" stroke-width="1.3"/><path d="M1531.5 1118V1121" stroke="#ead9a2" stroke-width="1.3"/><path d="M1536.5 1114V1122" stroke="#ead9a2" stroke-width="1.3"/><path d="M1542.5 1118V1121" stroke="#ead9a2" stroke-width="1.3"/><path d="M1547.5 1118V1121" stroke="#ead9a2" stroke-width="1.3"/><path d="M1553.5 1118V1121" stroke="#ead9a2" stroke-width="1.3"/><path d="M1559.5 1118V1121" stroke="#ead9a2" stroke-width="1.3"/><path d="M1564.5 1118V1121" stroke="#ead9a2" stroke-width="1.3"/><path d="M1570.5 1118V1121" stroke="#ead9a2" stroke-width="1.3"/><path d="M1575.5 1118V1121" stroke="#ead9a2" stroke-width="1.3"/><path d="M1581.5 1118V1121" stroke="#ead9a2" stroke-width="1.3"/><path d="M1587.5 1118V1121" stroke="#ead9a2" stroke-width="1.3"/><path d="M1592.5 1114V1122" stroke="#ead9a2" stroke-width="1.3"/><path d="M1598.5 1118V1121" stroke="#ead9a2" stroke-width="1.3"/><path d="M1603.5 1118V1121" stroke="#ead9a2" stroke-width="1.3"/><path d="M1609.5 1118V1121" stroke="#ead9a2" stroke-width="1.3"/><path d="M1614.5 1118V1121" stroke="#ead9a2" stroke-width="1.3"/><path d="M1620.5 1118V1121" stroke="#ead9a2" stroke-width="1.3"/><path d="M1626.5 1118V1121" stroke="#ead9a2" stroke-width="1.3"/><path d="M1631.5 1118V1121" stroke="#ead9a2" stroke-width="1.3"/><path d="M1637.5 1118V1121" stroke="#ead9a2" stroke-width="1.3"/><path d="M1642.5 1118V1121" stroke="#ead9a2" stroke-width="1.3"/><path d="M1648.5 1114V1122" stroke="#ead9a2" stroke-width="1.3"/><path d="M1653.5 1118V1121" stroke="#ead9a2" stroke-width="1.3"/><path d="M1659.5 1118V1121" stroke="#ead9a2" stroke-width="1.3"/><path d="M1665.5 1118V1121" stroke="#ead9a2" stroke-width="1.3"/><path d="M1670.5 1118V1121" stroke="#ead9a2" stroke-width="1.3"/><path d="M1676.5 1118V1121" stroke="#ead9a2" stroke-width="1.3"/><path d="M1681.5 1118V1121" stroke="#ead9a2" stroke-width="1.3"/><path d="M1687.5 1118V1121" stroke="#ead9a2" stroke-width="1.3"/><path d="M1692.5 1118V1121" stroke="#ead9a2" stroke-width="1.3"/><path d="M1698.5 1118V1121" stroke="#ead9a2" stroke-width="1.3"/><path d="M1704.5 1114V1122" stroke="#ead9a2" stroke-width="1.3"/><path d="M1709.5 1118V1121" stroke="#ead9a2" stroke-width="1.3"/><path d="M1715.5 1118V1121" stroke="#ead9a2" stroke-width="1.3"/><path d="M1720.5 1118V1121" stroke="#ead9a2" stroke-width="1.3"/><path d="M1726.5 1118V1121" stroke="#ead9a2" stroke-width="1.3"/><path d="M1732.5 1118V1121" stroke="#ead9a2" stroke-width="1.3"/><path d="M1737.5 1118V1121" stroke="#ead9a2" stroke-width="1.3"/><path d="M1743.5 1118V1121" stroke="#ead9a2" stroke-width="1.3"/><path d="M1748.5 1118V1121" stroke="#ead9a2" stroke-width="1.3"/><path d="M1754.5 1118V1121" stroke="#ead9a2" stroke-width="1.3"/><path d="M1759.5 1114V1122" stroke="#ead9a2" stroke-width="1.3"/><path d="M1765.5 1118V1121" stroke="#ead9a2" stroke-width="1.3"/><path d="M1771.5 1118V1121" stroke="#ead9a2" stroke-width="1.3"/><path d="M1776.5 1118V1121" stroke="#ead9a2" stroke-width="1.3"/><path d="M1782.5 1118V1121" stroke="#ead9a2" stroke-width="1.3"/><path d="M1787.5 1118V1121" stroke="#ead9a2" stroke-width="1.3"/><path d="M1793.5 1118V1121" stroke="#ead9a2" stroke-width="1.3"/><path d="M1798.5 1118V1121" stroke="#ead9a2" stroke-width="1.3"/><path d="M1804.5 1118V1121" stroke="#ead9a2" stroke-width="1.3"/><path d="M1810.5 1118V1121" stroke="#ead9a2" stroke-width="1.3"/><path d="M1815.5 1114V1122" stroke="#ead9a2" stroke-width="1.3"/><path d="M1821.5 1118V1121" stroke="#ead9a2" stroke-width="1.3"/><path d="M1826.5 1118V1121" stroke="#ead9a2" stroke-width="1.3"/><path d="M1832.5 1118V1121" stroke="#ead9a2" stroke-width="1.3"/><path d="M1837.5 1118V1121" stroke="#ead9a2" stroke-width="1.3"/><path d="M1843.5 1118V1121" stroke="#ead9a2" stroke-width="1.3"/><path d="M1849.5 1118V1121" stroke="#ead9a2" stroke-width="1.3"/><path d="M1854.5 1118V1121" stroke="#ead9a2" stroke-width="1.3"/><path d="M1860.5 1118V1121" stroke="#ead9a2" stroke-width="1.3"/><path d="M1865.5 1118V1121" stroke="#ead9a2" stroke-width="1.3"/><path d="M1871.5 1114V1122" stroke="#ead9a2" stroke-width="1.3"/><path d="M1877.5 1118V1121" stroke="#ead9a2" stroke-width="1.3"/><path d="M1882.5 1118V1121" stroke="#ead9a2" stroke-width="1.3"/><path d="M1888.5 1118V1121" stroke="#ead9a2" stroke-width="1.3"/><path d="M1893.5 1118V1121" stroke="#ead9a2" stroke-width="1.3"/><path d="M1899.5 1118V1121" stroke="#ead9a2" stroke-width="1.3"/><path d="M1904.5 1118V1121" stroke="#ead9a2" stroke-width="1.3"/><path d="M1910.5 1118V1121" stroke="#ead9a2" stroke-width="1.3"/><path d="M1916.5 1118V1121" stroke="#ead9a2" stroke-width="1.3"/><path d="M1921.5 1118V1121" stroke="#ead9a2" stroke-width="1.3"/><path d="M1927.5 1114V1122" stroke="#ead9a2" stroke-width="1.3"/><path d="M1932.5 1118V1121" stroke="#ead9a2" stroke-width="1.3"/><path d="M1938.5 1118V1121" stroke="#ead9a2" stroke-width="1.3"/><path d="M1943.5 1118V1121" stroke="#ead9a2" stroke-width="1.3"/><path d="M1949.5 1118V1121" stroke="#ead9a2" stroke-width="1.3"/><path d="M1955.5 1118V1121" stroke="#ead9a2" stroke-width="1.3"/><path d="M1960.5 1118V1121" stroke="#ead9a2" stroke-width="1.3"/><path d="M1966.5 1118V1121" stroke="#ead9a2" stroke-width="1.3"/><path d="M1971.5 1118V1121" stroke="#ead9a2" stroke-width="1.3"/><path d="M1977.5 1118V1121" stroke="#ead9a2" stroke-width="1.3"/><path d="M1982.5 1114V1122" stroke="#ead9a2" stroke-width="1.3"/><path d="M1988.5 1118V1121" stroke="#ead9a2" stroke-width="1.3"/><path d="M1994.5 1118V1121" stroke="#ead9a2" stroke-width="1.3"/><path d="M1999.5 1118V1121" stroke="#ead9a2" stroke-width="1.3"/><path d="M2005.5 1118V1121" stroke="#ead9a2" stroke-width="1.3"/><path d="M2010.5 1118V1121" stroke="#ead9a2" stroke-width="1.3"/><path d="M2016.5 1118V1121" stroke="#ead9a2" stroke-width="1.3"/><path d="M2022.5 1118V1121" stroke="#ead9a2" stroke-width="1.3"/><path d="M2027.5 1118V1121" stroke="#ead9a2" stroke-width="1.3"/><path d="M2033.5 1118V1121" stroke="#ead9a2" stroke-width="1.3"/><path d="M2038.5 1114V1122" stroke="#ead9a2" stroke-width="1.3"/><path d="M2044.5 1118V1121" stroke="#ead9a2" stroke-width="1.3"/><path d="M2049.5 1118V1121" stroke="#ead9a2" stroke-width="1.3"/><path d="M2055.5 1118V1121" stroke="#ead9a2" stroke-width="1.3"/><path d="M2061.5 1118V1121" stroke="#ead9a2" stroke-width="1.3"/><path d="M2066.5 1118V1121" stroke="#ead9a2" stroke-width="1.3"/><path d="M2072.5 1118V1121" stroke="#ead9a2" stroke-width="1.3"/><path d="M2077.5 1118V1121" stroke="#ead9a2" stroke-width="1.3"/><path d="M2083.5 1118V1121" stroke="#ead9a2" stroke-width="1.3"/><path d="M2088.5 1118V1121" stroke="#ead9a2" stroke-width="1.3"/><path d="M2094.5 1114V1122" stroke="#ead9a2" stroke-width="1.3"/><path d="M2100.5 1118V1121" stroke="#ead9a2" stroke-width="1.3"/><path d="M2105.5 1118V1121" stroke="#ead9a2" stroke-width="1.3"/><path d="M2111.5 1118V1121" stroke="#ead9a2" stroke-width="1.3"/><path d="M2116.5 1118V1121" stroke="#ead9a2" stroke-width="1.3"/><path d="M2122.5 1118V1121" stroke="#ead9a2" stroke-width="1.3"/><path d="M2127.5 1118V1121" stroke="#ead9a2" stroke-width="1.3"/><path d="M2133.5 1118V1121" stroke="#ead9a2" stroke-width="1.3"/><path d="M2139.5 1118V1121" stroke="#ead9a2" stroke-width="1.3"/><path d="M2144.5 1118V1121" stroke="#ead9a2" stroke-width="1.3"/><path d="M2150.5 1114V1122" stroke="#ead9a2" stroke-width="1.3"/><path d="M2155.5 1118V1121" stroke="#ead9a2" stroke-width="1.3"/><path d="M2161.5 1118V1121" stroke="#ead9a2" stroke-width="1.3"/><path d="M2167.5 1118V1121" stroke="#ead9a2" stroke-width="1.3"/><path d="M2172.5 1118V1121" stroke="#ead9a2" stroke-width="1.3"/><path d="M2178.5 1118V1121" stroke="#ead9a2" stroke-width="1.3"/><path d="M2183.5 1118V1121" stroke="#ead9a2" stroke-width="1.3"/><path d="M2189.5 1118V1121" stroke="#ead9a2" stroke-width="1.3"/><path d="M2194.5 1118V1121" stroke="#ead9a2" stroke-width="1.3"/><path d="M2200.5 1118V1121" stroke="#ead9a2" stroke-width="1.3"/><path d="M2206.5 1114V1122" stroke="#ead9a2" stroke-width="1.3"/><path d="M2211.5 1118V1121" stroke="#ead9a2" stroke-width="1.3"/><path d="M2217.5 1118V1121" stroke="#ead9a2" stroke-width="1.3"/><path d="M2222.5 1118V1121" stroke="#ead9a2" stroke-width="1.3"/><path d="M2228.5 1118V1121" stroke="#ead9a2" stroke-width="1.3"/><path d="M2233.5 1118V1121" stroke="#ead9a2" stroke-width="1.3"/><path d="M2239.5 1118V1121" stroke="#ead9a2" stroke-width="1.3"/><path d="M2245.5 1118V1121" stroke="#ead9a2" stroke-width="1.3"/><path d="M2250.5 1118V1121" stroke="#ead9a2" stroke-width="1.3"/><path d="M2256.5 1118V1121" stroke="#ead9a2" stroke-width="1.3"/><path d="M2261.5 1114V1122" stroke="#ead9a2" stroke-width="1.3"/><path d="M2267.5 1118V1121" stroke="#ead9a2" stroke-width="1.3"/><path d="M2272.5 1118V1121" stroke="#ead9a2" stroke-width="1.3"/><path d="M2278.5 1118V1121" stroke="#ead9a2" stroke-width="1.3"/><path d="M2284.5 1118V1121" stroke="#ead9a2" stroke-width="1.3"/><path d="M2289.5 1118V1121" stroke="#ead9a2" stroke-width="1.3"/><path d="M2295.5 1118V1121" stroke="#ead9a2" stroke-width="1.3"/><path d="M2300.5 1118V1121" stroke="#ead9a2" stroke-width="1.3"/><path d="M2306.5 1118V1121" stroke="#ead9a2" stroke-width="1.3"/><path d="M2312.5 1118V1121" stroke="#ead9a2" stroke-width="1.3"/><path d="M2317.5 1114V1122" stroke="#ead9a2" stroke-width="1.3"/></svg><div class="t" style="left:477px;top:1100px;font-size:11.5px;color:#aebad0;line-height:20px">-30</div><div class="t" style="left:645px;top:1100px;font-size:11.5px;color:#aebad0;line-height:20px">0</div><div class="t" style="left:812px;top:1100px;font-size:11.5px;color:#aebad0;line-height:20px">30</div><div class="t" style="left:980px;top:1100px;font-size:11.5px;color:#aebad0;line-height:20px">60</div><div class="t" style="left:1147px;top:1100px;font-size:11.5px;color:#aebad0;line-height:20px">90</div><div class="t" style="left:1314px;top:1100px;font-size:11.5px;color:#aebad0;line-height:20px">120</div><div class="t" style="left:1482px;top:1100px;font-size:11.5px;color:#aebad0;line-height:20px">150</div><div class="t" style="left:1649px;top:1100px;font-size:11.5px;color:#aebad0;line-height:20px">180</div><div class="t" style="left:1816px;top:1100px;font-size:11.5px;color:#aebad0;line-height:20px">210</div><div class="t" style="left:1983px;top:1100px;font-size:11.5px;color:#aebad0;line-height:20px">240</div><div class="t" style="left:2151px;top:1100px;font-size:11.5px;color:#aebad0;line-height:20px">270</div><div style="left:1213px;top:1122px;width:1.6px;height:202px;background:#fff"></div><svg style="left:1206px;top:1100px" width="17" height="25"><path d="M2 1.5H15V14L8.5 22L2 14Z" fill="url(#gPh)" stroke="#111" stroke-width="2"/><defs><linearGradient id="gPh" x1="0" y1="0" x2="1" y2="0"><stop offset="0" stop-color="#e8e8e8"/><stop offset="1" stop-color="#777"/></linearGradient></defs></svg><div style="left:476px;top:1324px;width:96px;height:25px;background:#333335;border:1px solid #4a4a4c"></div><div class="t" style="left:482px;top:1326px;font-size:14px;color:#cfcfcf">-100.00</div><div style="left:863px;top:1324px;width:362px;height:25px;background:#58585a;border-radius:5px"></div><div style="left:863px;top:1324px;width:1362px;height:25px;background:#58585a;border-radius:5px"></div><div style="left:868px;top:1327px;width:8px;height:19px;background:#3c3c3e;border-radius:3px"></div><div style="left:2212px;top:1327px;width:8px;height:19px;background:#3c3c3e;border-radius:3px"></div><div class="t" style="left:895px;top:1326px;font-size:14px;color:#c4ccd8">-30</div><div class="t" style="left:2169px;top:1326px;font-size:14px;color:#c4ccd8">300</div><div style="left:2226px;top:1324px;width:97px;height:25px;background:#333335;border:1px solid #4a4a4c"></div><div class="t" style="left:2233px;top:1326px;font-size:14px;color:#cfcfcf">300.00</div><div style="left:45px;top:1350px;width:2508px;height:1px;background:#666"></div><div class="t" style="left:60px;top:1360px;font-size:14px;color:#c2c6ce">Version:</div><div class="t" style="left:126px;top:1360px;font-size:14px;color:#c2c6ce">6.1.601 (r37223)</div><div class="t" style="left:241px;top:1360px;font-size:14px;color:#c8c8c8">教程</div><svg style="left:2370px;top:1356px" width="175" height="26"><g fill="none" stroke="#7e7e7e" stroke-width="2"><rect x="3" y="3" width="22" height="20" rx="2"/><path d="M3 7H25" stroke-width="3"/><rect x="39" y="3" width="9" height="20" rx="2"/><rect x="50" y="3" width="9" height="20" rx="2"/><rect x="75" y="3" width="9" height="20" rx="2"/><rect x="86" y="3" width="9" height="9" rx="2"/><rect x="86" y="14" width="9" height="9" rx="2"/><rect x="111" y="3" width="10" height="9" rx="2"/><rect x="123" y="3" width="10" height="9" rx="2"/><rect x="111" y="14" width="10" height="9" rx="2"/><rect x="123" y="14" width="10" height="9" rx="2"/><rect x="148" y="3" width="22" height="20" rx="2"/><path d="M148 7H170" stroke-width="3"/><path d="M163 13A4.5 4.5 0 1 1 160 9.5"/></g><path d="M158 8L164 9L161 13Z" fill="#7e7e7e"/></svg><div style="left:2323px;top:1027px;width:12px;height:323px;background:#3d3d3f"></div><div style="left:2335px;top:1027px;width:4px;height:321px;background:#2d2d2d"></div><div style="left:45px;top:1350px;width:2508px;height:1px;background:#666"></div><div class="t" style="left:2351px;top:1042px;font-size:14px;color:#c8c8c8;font-weight:bold">快速菜单</div><div class="t" style="left:2351px;top:1086.0px;font-size:14px;color:#cfcfcf">播放类型</div><div style="left:2444px;top:1084px;width:96px;height:24px;background:#333335;border:1px solid #4a4a4c"></div><div class="t" style="left:2450px;top:1086.0px;font-size:14px;color:#cfcfcf">帧步进</div><div class="ddb" style="left:2520px;top:1087px;width:18px;height:19px"></div><svg style="left:2525.0px;top:1094.5px" width="8" height="5"><path d="M0 0H8L4.0 5Z" fill="#8a8a8a"/></svg><div style="left:2351px;top:1114px;width:189px;height:1px;background:#333335"></div><div style="left:2351px;top:1115px;width:189px;height:1px;background:#454547"></div><div class="t" style="left:2351px;top:1122.2px;font-size:14px;color:#cfcfcf">当前帧数</div><div style="left:2444px;top:1120px;width:96px;height:24px;background:#333335;border:1px solid #4a4a4c"></div><div class="t" style="left:2450px;top:1122.2px;font-size:14px;color:#cfcfcf">102.00</div><div style="left:2351px;top:1150px;width:189px;height:1px;background:#333335"></div><div style="left:2351px;top:1151px;width:189px;height:1px;background:#454547"></div><div class="t" style="left:2351px;top:1158.4px;font-size:14px;color:#cfcfcf">开始</div><div style="left:2444px;top:1156px;width:96px;height:24px;background:#333335;border:1px solid #4a4a4c"></div><div class="t" style="left:2450px;top:1158.4px;font-size:14px;color:#cfcfcf">0.00</div><div style="left:2351px;top:1186px;width:189px;height:1px;background:#333335"></div><div style="left:2351px;top:1187px;width:189px;height:1px;background:#454547"></div><div class="t" style="left:2351px;top:1194.6px;font-size:14px;color:#cfcfcf">结束</div><div style="left:2444px;top:1193px;width:96px;height:24px;background:#333335;border:1px solid #4a4a4c"></div><div class="t" style="left:2450px;top:1194.6px;font-size:14px;color:#cfcfcf">300.00</div><div style="left:2351px;top:1223px;width:189px;height:1px;background:#333335"></div><div style="left:2351px;top:1224px;width:189px;height:1px;background:#454547"></div><div class="t" style="left:2351px;top:1230.8px;font-size:14px;color:#cfcfcf">场景时间变换</div><div style="left:2444px;top:1229px;width:96px;height:24px;background:#333335;border:1px solid #4a4a4c"></div><div class="t" style="left:2450px;top:1230.8px;font-size:14px;color:#cfcfcf">1.00</div><div style="left:2520px;top:1230px;width:19px;height:22px;background:#38383a;border-left:1px solid #2d2d2d"></div><svg style="left:2521px;top:1231px" width="18" height="21"><path d="M5 8.5L9 4L13 8.5Z M5 12.5L9 17L13 12.5Z" fill="#888"/></svg><div style="left:2351px;top:1259px;width:189px;height:1px;background:#333335"></div><div style="left:2351px;top:1260px;width:189px;height:1px;background:#454547"></div><div class="t" style="left:2351px;top:1267.0px;font-size:14px;color:#cfcfcf">显示单位</div><div style="left:2444px;top:1265px;width:96px;height:24px;background:#333335;border:1px solid #4a4a4c"></div><div class="t" style="left:2450px;top:1267.0px;font-size:14px;color:#cfcfcf">帧</div><div class="ddb" style="left:2520px;top:1268px;width:18px;height:19px"></div><svg style="left:2525.0px;top:1275.5px" width="8" height="5"><path d="M0 0H8L4.0 5Z" fill="#8a8a8a"/></svg><div style="left:2351px;top:1295px;width:189px;height:1px;background:#333335"></div><div style="left:2351px;top:1296px;width:189px;height:1px;background:#454547"></div><div class="t" style="left:2351px;top:1303.2px;font-size:14px;color:#cfcfcf">FPS</div><div style="left:2444px;top:1301px;width:96px;height:24px;background:#333335;border:1px solid #4a4a4c"></div><div class="t" style="left:2450px;top:1303.2px;font-size:14px;color:#cfcfcf">30</div><div class="ddb" style="left:2520px;top:1304px;width:18px;height:19px"></div><svg style="left:2525.0px;top:1311.5px" width="8" height="5"><path d="M0 0H8L4.0 5Z" fill="#8a8a8a"/></svg></body></html>
